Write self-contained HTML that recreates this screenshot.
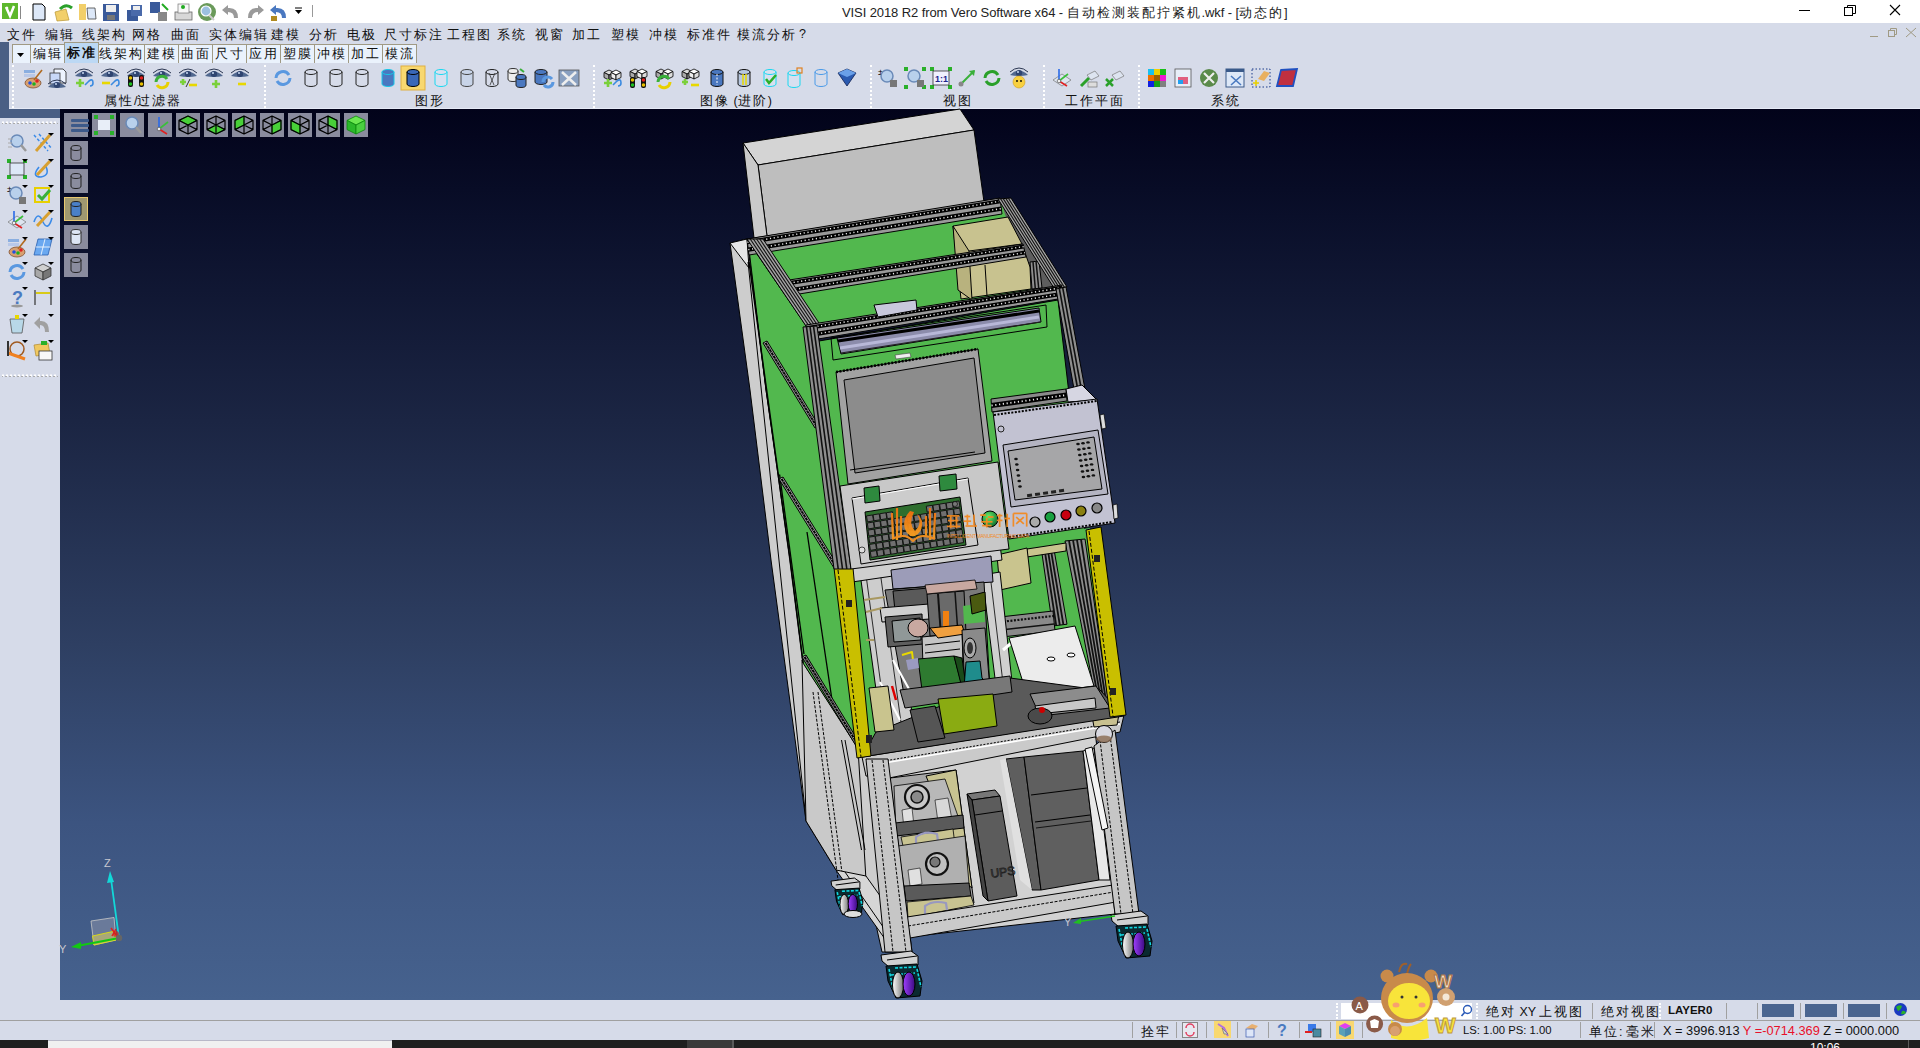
<!DOCTYPE html>
<html><head><meta charset="utf-8">
<style>
*{margin:0;padding:0;box-sizing:border-box}
html,body{width:1920px;height:1048px;overflow:hidden;background:#d6dbe9;font-family:"Liberation Sans",sans-serif;font-size:12px;color:#000;position:relative}
.abs{position:absolute}
#title{left:0;top:0;width:1920px;height:23px;background:#fff}
#ttext{left:842px;top:4px;font-size:13px;color:#222;white-space:nowrap;letter-spacing:-0.1px}
#menu{left:0;top:23px;width:1920px;height:19px;background:#d6dbe9}
.mi{position:absolute;top:27px;font-size:12.5px;white-space:nowrap;color:#111}
#tabs{left:12px;top:42px;width:404px;height:21px}
.tab{position:absolute;top:44px;height:19px;background:#eaf2fc;border:1px solid #a09a84;border-bottom:none;font-size:12.5px;text-align:center;line-height:19px;color:#111}
#tbpanel{left:9px;top:63px;width:1911px;height:46px;background:#d6dbe9;border-bottom:1px solid #e6eaf6}
.grip{position:absolute;width:2px;border-left:2px dotted #fff}
.lbl{position:absolute;top:93px;font-size:12.5px;white-space:nowrap;color:#111}
#viewport{left:60px;top:109px;width:1860px;height:892px;background:linear-gradient(#02031a 0%,#0a0f2a 12%,#1b2543 35%,#2e3f62 60%,#3c5480 80%,#46628e 100%)}
#lstrip{left:0;top:42px;width:9px;height:76px;background:#4a5f84}
#lstrip2{left:0;top:109px;width:60px;height:9px;background:#4a5f84}
.vb{position:absolute;width:24px;height:24px;background:#8a8c9e}
#status{left:0;top:1000px;width:1920px;height:40px;background:#d6dbe9}
.st{position:absolute;font-size:12.5px;white-space:nowrap;color:#111}
.sep{position:absolute;width:1px;background:#a0a0a0}
#taskbar{left:0;top:1040px;width:1920px;height:8px;background:#1f1f1f}
.cj{letter-spacing:2px}
</style></head><body>
<div id="title" class="abs"></div>
<div id="ttext" class="abs">VISI 2018 R2 from Vero Software x64 - <span class="cj">自动检测装配拧紧机</span>.wkf - [<span class="cj">动态的</span>]</div>
<!-- title icons -->
<svg class="abs" style="left:0;top:0" width="320" height="23">
<rect x="2" y="3" width="16" height="16" fill="#5db82c"/>
<path d="M6,7 L10,16 L14,6" stroke="#fff" stroke-width="2.5" fill="none"/><circle cx="7" cy="8" r="1.3" fill="#fff"/>
<line x1="20.5" y1="6" x2="20.5" y2="19" stroke="#888"/>
<path d="M33,4 L42,4 L45,7 L45,20 L33,20 Z" fill="#dde8f8" stroke="#000"/>
<path d="M55,12 L66,9 L69,20 L57,21 Z" fill="#f2cf6a" stroke="#b89530" stroke-width="0.7"/><path d="M60,9 Q66,3 72,8" stroke="#2aa02a" stroke-width="3" fill="none"/>
<path d="M79,4 L86,4 L86,20 L79,20 Z" fill="#f2cf6a"/><path d="M87,8 L95,8 L96,19 L88,19 Z" fill="#dde8f8" stroke="#444" stroke-width="0.8"/>
<rect x="103" y="4" width="16" height="17" fill="#3a5a9a"/><rect x="106" y="5" width="10" height="7" fill="#eee"/><rect x="107" y="15" width="8" height="5" fill="#777"/>
<rect x="127" y="10" width="11" height="11" fill="#3a5a9a"/><rect x="131" y="5" width="11" height="11" fill="#4a6aaa"/><rect x="133" y="6" width="7" height="4" fill="#eee"/>
<rect x="150" y="2" width="10" height="11" fill="#3a5a9a"/><rect x="158" y="12" width="9" height="9" fill="#888"/><path d="M162,4 L168,10" stroke="#2a2" stroke-width="2"/>
<rect x="175" y="12" width="17" height="8" fill="#d8d8d8" stroke="#666" stroke-width="0.8"/><rect x="178" y="4" width="11" height="9" fill="#f8f8f8" stroke="#777" stroke-width="0.7"/><circle cx="183" cy="7" r="2" fill="#2a2"/>
<circle cx="207" cy="12" r="9" fill="#6a9a5a"/><circle cx="206" cy="11" r="5" fill="#9cc0e0" stroke="#fff" stroke-width="1.2"/><line x1="209" y1="15" x2="214" y2="20" stroke="#ccc" stroke-width="2"/>
<path d="M238,18 Q238,7 228,8 L228,5 L222,10 L228,15 L228,12 Q234,12 234,18 Z" fill="#9a9a9a"/>
<path d="M248,18 Q248,7 258,8 L258,5 L264,10 L258,15 L258,12 Q252,12 252,18 Z" fill="#9a9a9a"/>
<path d="M286,18 Q286,7 276,8 L276,5 L270,10 L276,15 L276,12 Q282,12 282,18 Z" fill="#4a78c0"/><rect x="271" y="16" width="6" height="5" fill="#b08a20"/>
<path d="M295,10 L302,10 L298.5,14 Z" fill="#000"/><line x1="295" y1="8" x2="302" y2="8" stroke="#000"/>
<line x1="312.5" y1="5" x2="312.5" y2="17" stroke="#999"/>
</svg>
<div id="menu" class="abs"></div>
<!-- window buttons -->
<svg class="abs" style="left:1790px;top:0" width="130" height="42">
<line x1="9" y1="10.5" x2="20" y2="10.5" stroke="#000"/>
<rect x="54.5" y="7.5" width="8" height="8" fill="none" stroke="#000"/><path d="M57.5,7.5 V5.5 H65.5 V13.5 H62.5" fill="none" stroke="#000"/>
<path d="M100,5 L110,15 M110,5 L100,15" stroke="#000" stroke-width="1.1"/>
<line x1="80" y1="36.5" x2="88" y2="36.5" stroke="#a09a84"/>
<rect x="98.5" y="30.5" width="6" height="6" fill="none" stroke="#a09a84"/><path d="M100.5,30.5 V28.5 H106.5 V34.5 H104.5" fill="none" stroke="#a09a84"/>
<path d="M116,28 L126,37 M126,28 L116,37" stroke="#a09a84"/>
</svg>

<span class="mi" style="left:7px"><span class="cj">文件</span></span><span class="mi" style="left:45px"><span class="cj">编辑</span></span><span class="mi" style="left:82px"><span class="cj">线架构</span></span><span class="mi" style="left:132px"><span class="cj">网格</span></span><span class="mi" style="left:171px"><span class="cj">曲面</span></span><span class="mi" style="left:209px"><span class="cj">实体编辑</span></span><span class="mi" style="left:271px"><span class="cj">建模</span></span><span class="mi" style="left:309px"><span class="cj">分析</span></span><span class="mi" style="left:347px"><span class="cj">电极</span></span><span class="mi" style="left:384px"><span class="cj">尺寸标注</span></span><span class="mi" style="left:447px"><span class="cj">工程图</span></span><span class="mi" style="left:497px"><span class="cj">系统</span></span><span class="mi" style="left:535px"><span class="cj">视窗</span></span><span class="mi" style="left:572px"><span class="cj">加工</span></span><span class="mi" style="left:611px"><span class="cj">塑模</span></span><span class="mi" style="left:649px"><span class="cj">冲模</span></span><span class="mi" style="left:687px"><span class="cj">标准件</span></span><span class="mi" style="left:737px"><span class="cj">模流分析</span></span><span class="mi" style="left:799px">?</span>
<div id="lstrip" class="abs"></div>
<div id="tbpanel" class="abs"></div>
<!-- tabs -->
<div class="tab" style="left:12px;width:19px;"><svg width="17" height="17"><path d="M4,8 L11,8 L7.5,12 Z" fill="#000"/></svg></div>
<div class="tab" style="left:30px;width:35px"><span class="cj">编辑</span></div>
<div class="tab" style="left:64px;width:35px;top:42px;height:21px;background:#bcd8f4;font-weight:bold;line-height:20px"><span class="cj">标准</span></div>
<div class="tab" style="left:98px;width:47px"><span class="cj">线架构</span></div>
<div class="tab" style="left:144px;width:35px"><span class="cj">建模</span></div>
<div class="tab" style="left:178px;width:35px"><span class="cj">曲面</span></div>
<div class="tab" style="left:212px;width:35px"><span class="cj">尺寸</span></div>
<div class="tab" style="left:246px;width:35px"><span class="cj">应用</span></div>
<div class="tab" style="left:280px;width:35px"><span class="cj">塑膜</span></div>
<div class="tab" style="left:314px;width:35px"><span class="cj">冲模</span></div>
<div class="tab" style="left:348px;width:35px"><span class="cj">加工</span></div>
<div class="tab" style="left:382px;width:35px"><span class="cj">模流</span></div>
<!-- toolbar grips -->
<div class="grip" style="left:12px;top:65px;height:43px"></div>
<div class="grip" style="left:264px;top:65px;height:43px"></div>
<div class="grip" style="left:593px;top:65px;height:43px"></div>
<div class="grip" style="left:870px;top:65px;height:43px"></div>
<div class="grip" style="left:1043px;top:65px;height:43px"></div>
<div class="grip" style="left:1138px;top:65px;height:43px"></div>
<span class="lbl" style="left:104px"><span class="cj">属性</span>/<span class="cj">过滤器</span></span>
<span class="lbl" style="left:415px"><span class="cj">图形</span></span>
<span class="lbl" style="left:700px"><span class="cj">图像</span> (<span class="cj">进阶</span>)</span>
<span class="lbl" style="left:943px"><span class="cj">视图</span></span>
<span class="lbl" style="left:1065px"><span class="cj">工作平面</span></span>
<span class="lbl" style="left:1211px"><span class="cj">系统</span></span>

<svg class="abs" style="left:0;top:0" width="1320" height="109"><rect x="24" y="70" width="11" height="3" fill="#8aaee0"/><rect x="24" y="74" width="11" height="3" fill="#b8c8e8"/><ellipse cx="33" cy="83" rx="8" ry="5" fill="#d8a070" stroke="#805030" stroke-width="0.8"/><circle cx="30" cy="83" r="1.8" fill="#2050e0"/><circle cx="34" cy="84" r="1.8" fill="#20b020"/><circle cx="37" cy="81" r="1.8" fill="#e02020"/><line x1="34" y1="80" x2="42" y2="70" stroke="#b06a20" stroke-width="1.6"/><path d="M54,69 H63 L66,72 V83 H54 Z" fill="#eef4ff" stroke="#222" stroke-width="0.8"/><rect x="50" y="73" width="10" height="11" fill="#c8d8f8" stroke="#333" stroke-width="0.8"/><path d="M48,87 Q57,78 66,87 Q57,89 48,87 Z" fill="#51688f"/><ellipse cx="57" cy="85" rx="3.2" ry="3" fill="#2f4470"/><circle cx="56" cy="84" r="1" fill="#c8d8f0"/><path d="M48,84 Q57,76 66,84" stroke="#2a3550" stroke-width="1" fill="none"/><path d="M75,76 Q84,67 93,76 Q84,78 75,76 Z" fill="#51688f"/><ellipse cx="84" cy="74" rx="3.2" ry="3" fill="#2f4470"/><circle cx="83" cy="73" r="1" fill="#c8d8f0"/><path d="M75,73 Q84,65 93,73" stroke="#2a3550" stroke-width="1" fill="none"/><path d="M76,83 H84 M80,79 V87" stroke="#7ad03a" stroke-width="2.6"/><path d="M85,85 L89,81 Q93,78 93,83 Q93,86 90,86" stroke="#3a8ae0" stroke-width="1.6" fill="none"/><path d="M101,76 Q110,67 119,76 Q110,78 101,76 Z" fill="#51688f"/><ellipse cx="110" cy="74" rx="3.2" ry="3" fill="#2f4470"/><circle cx="109" cy="73" r="1" fill="#c8d8f0"/><path d="M101,73 Q110,65 119,73" stroke="#2a3550" stroke-width="1" fill="none"/><path d="M102,83 H110" stroke="#e8d800" stroke-width="2.6"/><path d="M111,85 L115,81 Q119,78 119,83 Q119,86 116,86" stroke="#3a8ae0" stroke-width="1.6" fill="none"/><path d="M127,76 Q136,67 145,76 Q136,78 127,76 Z" fill="#51688f"/><ellipse cx="136" cy="74" rx="3.2" ry="3" fill="#2f4470"/><circle cx="135" cy="73" r="1" fill="#c8d8f0"/><path d="M127,73 Q136,65 145,73" stroke="#2a3550" stroke-width="1" fill="none"/><rect x="128" y="75" width="5" height="12" rx="2" fill="#111"/><rect x="139" y="75" width="5" height="12" rx="2" fill="#111"/><circle cx="130.5" cy="78" r="1.8" fill="#e8c000"/><circle cx="130.5" cy="84" r="1.8" fill="#20c020"/><circle cx="141.5" cy="78" r="1.8" fill="#e02020"/><circle cx="141.5" cy="84" r="1.8" fill="#e8c000"/><path d="M153,76 Q162,67 171,76 Q162,78 153,76 Z" fill="#51688f"/><ellipse cx="162" cy="74" rx="3.2" ry="3" fill="#2f4470"/><circle cx="161" cy="73" r="1" fill="#c8d8f0"/><path d="M153,73 Q162,65 171,73" stroke="#2a3550" stroke-width="1" fill="none"/><path d="M156,82 A6,6 0 0 1 167,79" stroke="#3ab03a" stroke-width="3" fill="none"/><path d="M168,82 A6,6 0 0 1 157,85" stroke="#e8d000" stroke-width="3" fill="none"/><path d="M179,76 Q188,67 197,76 Q188,78 179,76 Z" fill="#51688f"/><ellipse cx="188" cy="74" rx="3.2" ry="3" fill="#2f4470"/><circle cx="187" cy="73" r="1" fill="#c8d8f0"/><path d="M179,73 Q188,65 197,73" stroke="#2a3550" stroke-width="1" fill="none"/><path d="M180,82 H186 M183,79 V85" stroke="#7ad03a" stroke-width="2.6"/><line x1="186" y1="87" x2="190" y2="79" stroke="#333"/><path d="M189,85 H197" stroke="#e8d800" stroke-width="2.6"/><path d="M205,76 Q214,67 223,76 Q214,78 205,76 Z" fill="#51688f"/><ellipse cx="214" cy="74" rx="3.2" ry="3" fill="#2f4470"/><circle cx="213" cy="73" r="1" fill="#c8d8f0"/><path d="M205,73 Q214,65 223,73" stroke="#2a3550" stroke-width="1" fill="none"/><path d="M212,84 H220 M216,80 V88" stroke="#7ad03a" stroke-width="2.6"/><path d="M231,76 Q240,67 249,76 Q240,78 231,76 Z" fill="#51688f"/><ellipse cx="240" cy="74" rx="3.2" ry="3" fill="#2f4470"/><circle cx="239" cy="73" r="1" fill="#c8d8f0"/><path d="M231,73 Q240,65 249,73" stroke="#2a3550" stroke-width="1" fill="none"/><path d="M238,84 H246" stroke="#e8d800" stroke-width="2.6"/><path d="M276,78 A7,7 0 0 1 289,75" stroke="#5a98e0" stroke-width="3" fill="none"/><path d="M290,78 A7,7 0 0 1 277,81" stroke="#5a98e0" stroke-width="3" fill="none"/><path d="M305,72 V84 A6,2.5 0 0 0 317,84 V72" fill="none" stroke="#222" stroke-width="1"/><ellipse cx="311" cy="72" rx="6" ry="2.5" fill="none" stroke="#222" stroke-width="1"/><path d="M330,72 V84 A6,2.5 0 0 0 342,84 V72" fill="none" stroke="#222" stroke-width="1"/><ellipse cx="336" cy="72" rx="6" ry="2.5" fill="none" stroke="#222" stroke-width="1"/><path d="M356,72 V84 A6,2.5 0 0 0 368,84 V72" fill="none" stroke="#222" stroke-width="1"/><ellipse cx="362" cy="72" rx="6" ry="2.5" fill="none" stroke="#222" stroke-width="1"/><path d="M382,72 V84 A6,2.5 0 0 0 394,84 V72" fill="#4a78c0" stroke="#18c8e8" stroke-width="1"/><ellipse cx="388" cy="72" rx="6" ry="2.5" fill="#4a78c0" stroke="#18c8e8" stroke-width="1"/><rect x="401" y="66" width="24" height="24" fill="#f8d870" stroke="#e0b040"/><path d="M407,72 V84 A6,2.5 0 0 0 419,84 V72" fill="#3a68b8" stroke="#000" stroke-width="1"/><ellipse cx="413" cy="72" rx="6" ry="2.5" fill="#3a68b8" stroke="#000" stroke-width="1"/><path d="M435,72 V84 A6,2.5 0 0 0 447,84 V72" fill="#d8e0f0" stroke="#18d8f0" stroke-width="1"/><ellipse cx="441" cy="72" rx="6" ry="2.5" fill="#d8e0f0" stroke="#18d8f0" stroke-width="1"/><path d="M461,72 V84 A6,2.5 0 0 0 473,84 V72" fill="#c8d4e8" stroke="#444" stroke-width="1"/><ellipse cx="467" cy="72" rx="6" ry="2.5" fill="#c8d4e8" stroke="#444" stroke-width="1"/><path d="M486,72 V84 A6,2.5 0 0 0 498,84 V72" fill="none" stroke="#222" stroke-width="1"/><ellipse cx="492" cy="72" rx="6" ry="2.5" fill="none" stroke="#222" stroke-width="1"/><path d="M489,73 L494,85 M495,73 L490,85" stroke="#333" stroke-width="0.8"/><path d="M508,71 V79 A5,2.5 0 0 0 518,79 V71" fill="#eee" stroke="#333" stroke-width="1"/><ellipse cx="513" cy="71" rx="5" ry="2.5" fill="#eee" stroke="#333" stroke-width="1"/><path d="M516,77 V85 A5,2.5 0 0 0 526,85 V77" fill="#4a78c0" stroke="#222" stroke-width="1"/><ellipse cx="521" cy="77" rx="5" ry="2.5" fill="#4a78c0" stroke="#222" stroke-width="1"/><path d="M520,69 L524,72" stroke="#3ab03a" stroke-width="2"/><path d="M535,72 V82 A6,2.5 0 0 0 547,82 V72" fill="#4a78c0" stroke="#222" stroke-width="1"/><ellipse cx="541" cy="72" rx="6" ry="2.5" fill="#4a78c0" stroke="#222" stroke-width="1"/><path d="M543,82 A5,5 0 0 1 552,79" stroke="#5a98e0" stroke-width="3" fill="none"/><path d="M553,82 A5,5 0 0 1 544,85" stroke="#5a98e0" stroke-width="3" fill="none"/><rect x="559" y="70" width="20" height="16" fill="#8aa0c0" stroke="#555" stroke-width="0.8"/><path d="M562,72 L576,85 M576,72 L562,85" stroke="#eee" stroke-width="2.5"/><path d="M604,72.5 L609,70 L614,72.5 L609,75 Z" fill="#ddd" stroke="#000" stroke-width="0.8"/><path d="M604,72.5 L609,75 L609,80 L604,77.5 Z" fill="#aaa" stroke="#000" stroke-width="0.8"/><path d="M614,72.5 L609,75 L609,80 L614,77.5 Z" fill="#888" stroke="#000" stroke-width="0.8"/><path d="M611,72.5 L616,70 L621,72.5 L616,75 Z" fill="#fff" stroke="#000" stroke-width="0.8"/><path d="M611,72.5 L616,75 L616,80 L611,77.5 Z" fill="#eee" stroke="#000" stroke-width="0.8"/><path d="M621,72.5 L616,75 L616,80 L621,77.5 Z" fill="#ddd" stroke="#000" stroke-width="0.8"/><path d="M604,83 H612 M608,79 V87" stroke="#7ad03a" stroke-width="2.6"/><path d="M613,85 L617,81 Q621,78 621,83 Q621,86 618,86" stroke="#3a8ae0" stroke-width="1.6" fill="none"/><path d="M630,71.5 L635,69 L640,71.5 L635,74 Z" fill="#ddd" stroke="#000" stroke-width="0.8"/><path d="M630,71.5 L635,74 L635,79 L630,76.5 Z" fill="#aaa" stroke="#000" stroke-width="0.8"/><path d="M640,71.5 L635,74 L635,79 L640,76.5 Z" fill="#888" stroke="#000" stroke-width="0.8"/><path d="M637,71.5 L642,69 L647,71.5 L642,74 Z" fill="#fff" stroke="#000" stroke-width="0.8"/><path d="M637,71.5 L642,74 L642,79 L637,76.5 Z" fill="#eee" stroke="#000" stroke-width="0.8"/><path d="M647,71.5 L642,74 L642,79 L647,76.5 Z" fill="#ddd" stroke="#000" stroke-width="0.8"/><rect x="630" y="77" width="5" height="11" rx="2" fill="#111"/><rect x="641" y="77" width="5" height="11" rx="2" fill="#111"/><circle cx="632.5" cy="80" r="1.8" fill="#e8c000"/><circle cx="632.5" cy="85" r="1.8" fill="#20c020"/><circle cx="643.5" cy="80" r="1.8" fill="#e02020"/><circle cx="643.5" cy="85" r="1.8" fill="#e8c000"/><path d="M656,71.5 L661,69 L666,71.5 L661,74 Z" fill="#ddd" stroke="#000" stroke-width="0.8"/><path d="M656,71.5 L661,74 L661,79 L656,76.5 Z" fill="#aaa" stroke="#000" stroke-width="0.8"/><path d="M666,71.5 L661,74 L661,79 L666,76.5 Z" fill="#888" stroke="#000" stroke-width="0.8"/><path d="M663,71.5 L668,69 L673,71.5 L668,74 Z" fill="#fff" stroke="#000" stroke-width="0.8"/><path d="M663,71.5 L668,74 L668,79 L663,76.5 Z" fill="#eee" stroke="#000" stroke-width="0.8"/><path d="M673,71.5 L668,74 L668,79 L673,76.5 Z" fill="#ddd" stroke="#000" stroke-width="0.8"/><path d="M658,82 A6,6 0 0 1 669,79" stroke="#3ab03a" stroke-width="3" fill="none"/><path d="M670,82 A6,6 0 0 1 659,85" stroke="#e8d000" stroke-width="3" fill="none"/><path d="M682,71.5 L687,69 L692,71.5 L687,74 Z" fill="#ddd" stroke="#000" stroke-width="0.8"/><path d="M682,71.5 L687,74 L687,79 L682,76.5 Z" fill="#aaa" stroke="#000" stroke-width="0.8"/><path d="M692,71.5 L687,74 L687,79 L692,76.5 Z" fill="#888" stroke="#000" stroke-width="0.8"/><path d="M689,71.5 L694,69 L699,71.5 L694,74 Z" fill="#fff" stroke="#000" stroke-width="0.8"/><path d="M689,71.5 L694,74 L694,79 L689,76.5 Z" fill="#eee" stroke="#000" stroke-width="0.8"/><path d="M699,71.5 L694,74 L694,79 L699,76.5 Z" fill="#ddd" stroke="#000" stroke-width="0.8"/><path d="M682,82 H688 M685,79 V85" stroke="#7ad03a" stroke-width="2.6"/><path d="M691,85 H699" stroke="#e8d800" stroke-width="2.6"/><path d="M711,72 V84 A6,2.5 0 0 0 723,84 V72" fill="#4a78c0" stroke="#111" stroke-width="1"/><ellipse cx="717" cy="72" rx="6" ry="2.5" fill="#4a78c0" stroke="#111" stroke-width="1"/><line x1="717" y1="74" x2="717" y2="85" stroke="#fff" stroke-dasharray="2,1.5"/><path d="M738,72 V84 A6,2.5 0 0 0 750,84 V72" fill="#b8c8e0" stroke="#111" stroke-width="1"/><ellipse cx="744" cy="72" rx="6" ry="2.5" fill="#b8c8e0" stroke="#111" stroke-width="1"/><line x1="743" y1="74" x2="743" y2="85" stroke="#e8d800" stroke-width="1.5"/><line x1="746" y1="74" x2="746" y2="85" stroke="#e8d800" stroke-width="1.5"/><path d="M764,72 V84 A6,2.5 0 0 0 776,84 V72" fill="#d8e0f0" stroke="#18d8f0" stroke-width="1"/><ellipse cx="770" cy="72" rx="6" ry="2.5" fill="#d8e0f0" stroke="#18d8f0" stroke-width="1"/><path d="M766,79 L769,83 L776,75" stroke="#2ab02a" stroke-width="2.5" fill="none"/><path d="M788,73 V85 A6,2.5 0 0 0 800,85 V73" fill="#d8e0f0" stroke="#18d8f0" stroke-width="1"/><ellipse cx="794" cy="73" rx="6" ry="2.5" fill="#d8e0f0" stroke="#18d8f0" stroke-width="1"/><rect x="797" y="68" width="5" height="5" fill="none" stroke="#e08020" stroke-width="1.2"/><path d="M815,72 V84 A6,2.5 0 0 0 827,84 V72" fill="none" stroke="#4a9ae8" stroke-width="1"/><ellipse cx="821" cy="72" rx="6" ry="2.5" fill="none" stroke="#4a9ae8" stroke-width="1"/><path d="M838,73 L847,69 L856,73 L847,86 Z" fill="#2a5ab0" stroke="#102050" stroke-width="0.8"/><path d="M838,73 L847,77 L856,73 L847,69 Z" fill="#6aa0e8"/><text x="878" y="75" font-size="9" font-family="Liberation Sans">±</text><circle cx="887" cy="76" r="6" fill="#b8d0ec" stroke="#6a8ab8" stroke-width="1.5"/><line x1="891" y1="80" x2="896" y2="86" stroke="#999" stroke-width="2.5"/><rect x="890" y="80" width="7" height="7" fill="#777"/><rect x="904" y="67" width="4" height="4" fill="#2ab02a"/><rect x="904" y="85" width="4" height="4" fill="#2ab02a"/><rect x="922" y="67" width="4" height="4" fill="#2ab02a"/><rect x="922" y="85" width="4" height="4" fill="#2ab02a"/><circle cx="914" cy="76" r="6" fill="#b8d0ec" stroke="#6a8ab8" stroke-width="1.5"/><line x1="918" y1="80" x2="923" y2="86" stroke="#999" stroke-width="2.5"/><rect x="917" y="80" width="7" height="7" fill="#777"/><rect x="930" y="67" width="4" height="4" fill="#2ab02a"/><rect x="930" y="85" width="4" height="4" fill="#2ab02a"/><rect x="948" y="67" width="4" height="4" fill="#2ab02a"/><rect x="948" y="85" width="4" height="4" fill="#2ab02a"/><rect x="933" y="71" width="16" height="14" fill="#f0f0ff" stroke="#333" stroke-width="0.8"/><text x="935" y="82" font-size="9" font-family="Liberation Sans" fill="#22228a" font-weight="bold">1:1</text><line x1="961" y1="84" x2="974" y2="71" stroke="#3ab03a" stroke-width="2"/><path d="M975,70 L969,71 L974,76 Z" fill="#3ab03a"/><circle cx="961" cy="84" r="2.5" fill="#888"/><path d="M985,78 A7,7 0 0 1 998,75" stroke="#2aa02a" stroke-width="3" fill="none"/><path d="M999,78 A7,7 0 0 1 986,81" stroke="#2aa02a" stroke-width="3" fill="none"/><path d="M1010,75 Q1019,66 1028,75 Q1019,77 1010,75 Z" fill="#51688f"/><ellipse cx="1019" cy="73" rx="3.2" ry="3" fill="#2f4470"/><circle cx="1018" cy="72" r="1" fill="#c8d8f0"/><path d="M1010,72 Q1019,64 1028,72" stroke="#2a3550" stroke-width="1" fill="none"/><circle cx="1019" cy="82" r="6" fill="#f8d040" stroke="#d0a020" stroke-width="0.6"/><circle cx="1017" cy="81" r="0.9" fill="#000"/><circle cx="1021" cy="81" r="0.9" fill="#000"/><path d="M1053,80 L1062,74 L1071,80 L1062,86 Z" fill="#dde4f0" stroke="#777" stroke-width="0.7"/><line x1="1059" y1="81" x2="1059" y2="69" stroke="#2a6ae8" stroke-width="1.6"/><line x1="1059" y1="81" x2="1068" y2="74" stroke="#3ac03a" stroke-width="1.6"/><line x1="1059" y1="81" x2="1067" y2="86" stroke="#e02020" stroke-width="1.6"/><circle cx="1059" cy="81" r="1.8" fill="#eee" stroke="#444" stroke-width="0.6"/><path d="M1087,75 L1095,71 L1099,76 L1091,80 Z" fill="#dde4f0" stroke="#777" stroke-width="0.7"/><rect x="1088" y="82" width="9" height="5" fill="#ddd" stroke="#777" stroke-width="0.7"/><path d="M1081,86 L1089,78" stroke="#2aa02a" stroke-width="3"/><path d="M1112,75 L1120,71 L1124,76 L1116,80 Z" fill="#dde4f0" stroke="#777" stroke-width="0.7"/><path d="M1106,86 L1113,79 M1106,79 L1113,86" stroke="#2aa02a" stroke-width="2.5"/><rect x="1148" y="69" width="6" height="6" fill="#18c0f0"/><rect x="1154" y="69" width="6" height="6" fill="#f0d000"/><rect x="1160" y="69" width="6" height="6" fill="#18c018"/><rect x="1148" y="75" width="6" height="6" fill="#f07000"/><rect x="1154" y="75" width="6" height="6" fill="#a06000"/><rect x="1160" y="75" width="6" height="6" fill="#f018d0"/><rect x="1148" y="81" width="6" height="6" fill="#1020e0"/><rect x="1154" y="81" width="6" height="6" fill="#18a018"/><rect x="1160" y="81" width="6" height="6" fill="#808080"/><rect x="1175" y="69" width="16" height="18" fill="#e8eef8" stroke="#555" stroke-width="0.8"/><rect x="1178" y="77" width="10" height="7" fill="#e06080"/><rect x="1178" y="80" width="5" height="4" fill="#20a0f0"/><circle cx="1209" cy="78" r="9" fill="#5a8a4a"/><path d="M1204,73 L1214,83 M1214,73 L1204,83" stroke="#eee" stroke-width="2.2"/><rect x="1226" y="69" width="18" height="18" fill="#dde8f8" stroke="#3a5a8a" stroke-width="1"/><rect x="1226" y="69" width="18" height="3" fill="#3a5a8a"/><path d="M1231,76 L1241,85 M1241,76 L1231,85" stroke="#4a7ac0" stroke-width="1.6"/><rect x="1252" y="69" width="18" height="18" fill="none" stroke="#1a3a8a" stroke-dasharray="1.5,2"/><path d="M1258,79 L1264,71 L1270,73 L1264,81 Z" fill="#e8b060"/><path d="M1253,83 H1259 M1256,80 V86" stroke="#e8d000" stroke-width="1.6"/><path d="M1281,70 L1297,69 L1293,86 L1277,86 Z" fill="#c03040" stroke="#2050c0" stroke-width="1.8"/></svg>
<div id="lstrip2" class="abs"></div>
<div id="viewport" class="abs"></div>
<svg class="abs" style="left:0;top:118px" width="60" height="882"><line x1="2" y1="4.5" x2="58" y2="4.5" stroke="#fff" stroke-width="2" stroke-dasharray="2,2"/><line x1="2" y1="257.5" x2="58" y2="257.5" stroke="#fff" stroke-width="2" stroke-dasharray="2,2"/><line x1="2" y1="5.5" x2="58" y2="5.5" stroke="#aaa" stroke-width="1" stroke-dasharray="2,2" stroke-dashoffset="1"/><line x1="2" y1="258.5" x2="58" y2="258.5" stroke="#aaa" stroke-width="1" stroke-dasharray="2,2" stroke-dashoffset="1"/><circle cx="17" cy="23" r="6" fill="#b8d0ec" stroke="#6a8ab8" stroke-width="1.5"/><line x1="21" y1="27" x2="26" y2="33" stroke="#999" stroke-width="2.5"/><path d="M8,21 L13,21 M8,25 L12,25 M8,29 L12,29" stroke="#aaa" stroke-width="1.2"/><path d="M34,17 L48,33 M39,16 L52,31" stroke="#3a8ae8" stroke-width="1.5" stroke-dasharray="3,2"/><line x1="36" y1="33" x2="50" y2="17" stroke="#d8a030" stroke-width="3"/><path d="M48,15 h6 l-3,3 z" fill="#000"/><rect x="7" y="41" width="4" height="4" fill="#2ab02a"/><rect x="7" y="57" width="4" height="4" fill="#2ab02a"/><rect x="23" y="41" width="4" height="4" fill="#2ab02a"/><rect x="23" y="57" width="4" height="4" fill="#2ab02a"/><rect x="10" y="45" width="14" height="12" fill="#dde8f8" stroke="#333" stroke-width="0.8"/><path d="M39,49 Q31,59 41,59 Q51,57 45,47" stroke="#3a8ae8" stroke-width="1.6" fill="none"/><line x1="37" y1="57" x2="50" y2="43" stroke="#d8a030" stroke-width="3"/><path d="M22,41 h6 l-3,3 z" fill="#000"/><path d="M48,41 h6 l-3,3 z" fill="#000"/><text x="7" y="74" font-size="9" font-family="Liberation Sans">±</text><circle cx="16" cy="75" r="6" fill="#b8d0ec" stroke="#6a8ab8" stroke-width="1.5"/><line x1="20" y1="79" x2="25" y2="85" stroke="#999" stroke-width="2.5"/><rect x="19" y="79" width="7" height="7" fill="#777"/><rect x="35" y="70" width="14" height="14" fill="none" stroke="#e8d000" stroke-width="2"/><path d="M38,77 L42,81 L50,72" stroke="#3ab03a" stroke-width="3" fill="none"/><path d="M22,67 h6 l-3,3 z" fill="#000"/><path d="M48,67 h6 l-3,3 z" fill="#000"/><path d="M8,104 L17,98 L26,104 L17,110 Z" fill="#dde4f0" stroke="#777" stroke-width="0.7"/><line x1="14" y1="105" x2="14" y2="93" stroke="#2a6ae8" stroke-width="1.6"/><line x1="14" y1="105" x2="23" y2="98" stroke="#3ac03a" stroke-width="1.6"/><line x1="14" y1="105" x2="22" y2="110" stroke="#e02020" stroke-width="1.6"/><circle cx="14" cy="105" r="1.8" fill="#eee" stroke="#444" stroke-width="0.6"/><path d="M34,104 Q38,92 43,104 Q48,114 52,100" stroke="#3a8ae8" stroke-width="1.6" fill="none"/><line x1="37" y1="108" x2="50" y2="94" stroke="#d8a030" stroke-width="3"/><path d="M22,92 h6 l-3,3 z" fill="#000"/><path d="M48,92 h6 l-3,3 z" fill="#000"/><rect x="8" y="121" width="11" height="3" fill="#8aaee0"/><rect x="8" y="125" width="11" height="3" fill="#b8c8e8"/><ellipse cx="17" cy="134" rx="8" ry="5" fill="#d8a070" stroke="#805030" stroke-width="0.8"/><circle cx="14" cy="134" r="1.8" fill="#2050e0"/><circle cx="18" cy="135" r="1.8" fill="#20b020"/><circle cx="21" cy="132" r="1.8" fill="#e02020"/><line x1="18" y1="131" x2="26" y2="121" stroke="#b06a20" stroke-width="1.6"/><path d="M38,121 L52,121 L48,137 L34,137 Z" fill="#6aa8f0" stroke="#2a60b0" stroke-width="0.8"/><path d="M45,121 L41,137 M36,129 L50,129" stroke="#fff" stroke-width="0.8"/><path d="M22,119 h6 l-3,3 z" fill="#000"/><path d="M48,119 h6 l-3,3 z" fill="#000"/><path d="M10,154 A7,7 0 0 1 23,151" stroke="#5a98e0" stroke-width="3" fill="none"/><path d="M24,154 A7,7 0 0 1 11,157" stroke="#5a98e0" stroke-width="3" fill="none"/><path d="M35,150.0 L43,146 L51,150.0 L43,154 Z" fill="#d0d0d0" stroke="#333" stroke-width="0.8"/><path d="M35,150.0 L43,154 L43,162 L35,158.0 Z" fill="#a8a8a8" stroke="#333" stroke-width="0.8"/><path d="M51,150.0 L43,154 L43,162 L51,158.0 Z" fill="#777" stroke="#333" stroke-width="0.8"/><path d="M22,144 h6 l-3,3 z" fill="#000"/><path d="M48,144 h6 l-3,3 z" fill="#000"/><text x="12" y="186" font-size="18" font-weight="bold" font-family="Liberation Sans" fill="#4a7ac0">?</text><ellipse cx="17" cy="188" rx="6" ry="1.5" fill="#999"/><path d="M35,172 V187 M51,172 V187" stroke="#333" stroke-width="1.2"/><path d="M36,175 H50" stroke="#d8c800" stroke-width="1.8"/><path d="M22,169 h6 l-3,3 z" fill="#000"/><path d="M48,169 h6 l-3,3 z" fill="#000"/><path d="M10,201 L24,201 L22,215 L12,215 Z" fill="#b8d8e8" stroke="#555" stroke-width="0.8"/><rect x="15" y="197" width="4" height="4" fill="#e8d800"/><path d="M49,214 Q49,202 40,203 L40,199 L34,205 L40,211 L40,207 Q45,207 45,214 Z" fill="#a0a0a0"/><path d="M22,196 h6 l-3,3 z" fill="#000"/><path d="M48,196 h6 l-3,3 z" fill="#000"/><circle cx="17" cy="231" r="7" fill="none" stroke="#a05a20" stroke-width="1.5"/><path d="M8,235 L25,241" stroke="#f08020" stroke-width="3"/><rect x="7" y="223" width="2" height="15" fill="#333"/><path d="M34,227 L48,225 L50,236 L36,238 Z" fill="#f0c860" stroke="#b08a30" stroke-width="0.7"/><rect x="39" y="233" width="13" height="9" fill="#f8f8f8" stroke="#333" stroke-width="0.8"/><rect x="41" y="223" width="6" height="4" fill="#2ab02a"/><path d="M22,222 h6 l-3,3 z" fill="#000"/><path d="M48,222 h6 l-3,3 z" fill="#000"/></svg>
<svg class="abs" style="left:60px;top:109px" width="320" height="180"><rect x="4" y="4" width="24" height="24" fill="#8a8c9e"/><rect x="32" y="4" width="24" height="24" fill="#8a8c9e"/><rect x="60" y="4" width="24" height="24" fill="#8a8c9e"/><rect x="88" y="4" width="24" height="24" fill="#8a8c9e"/><rect x="116" y="4" width="24" height="24" fill="#8a8c9e"/><rect x="144" y="4" width="24" height="24" fill="#8a8c9e"/><rect x="172" y="4" width="24" height="24" fill="#8a8c9e"/><rect x="200" y="4" width="24" height="24" fill="#8a8c9e"/><rect x="228" y="4" width="24" height="24" fill="#8a8c9e"/><rect x="256" y="4" width="24" height="24" fill="#8a8c9e"/><rect x="284" y="4" width="24" height="24" fill="#8a8c9e"/><rect x="11" y="10" width="18" height="3" rx="1" fill="#3d5a8a"/><rect x="11" y="15" width="18" height="3" rx="1" fill="#3d5a8a"/><rect x="11" y="20" width="18" height="3" rx="1" fill="#3d5a8a"/><rect x="34" y="6" width="4" height="4" fill="#2ab02a"/><rect x="34" y="22" width="4" height="4" fill="#2ab02a"/><rect x="50" y="6" width="4" height="4" fill="#2ab02a"/><rect x="50" y="22" width="4" height="4" fill="#2ab02a"/><rect x="38" y="11" width="12" height="10" fill="#e8eef8"/><circle cx="72" cy="14" r="6" fill="#b8d0ec" stroke="#6a8ab8" stroke-width="1.5"/><line x1="76" y1="18" x2="81" y2="24" stroke="#999" stroke-width="2.5"/><line x1="99" y1="20" x2="99" y2="8" stroke="#2a6ae8" stroke-width="1.6"/><line x1="99" y1="20" x2="108" y2="13" stroke="#3ac03a" stroke-width="1.6"/><line x1="99" y1="20" x2="107" y2="25" stroke="#e02020" stroke-width="1.6"/><circle cx="99" cy="20" r="1.8" fill="#eee" stroke="#444" stroke-width="0.6"/><polygon points="128.0,7.0 137.0,11.4 128.0,16.0 119.0,11.4" fill="#48d038" stroke="#0a8a0a" stroke-width="0.8"/><path d="M128,7 L137,11.4 L137,20.6 L128,25 L119,20.6 L119,11.4 Z M128,16 L119,11.4 M128,16 L137,11.4 M128,16 L119,20.6 M128,16 L137,20.6 M128,16 L128,25" fill="none" stroke="#000" stroke-width="1.2" stroke-linejoin="round"/><polygon points="156.0,16.0 165.0,20.6 156.0,25.0 147.0,20.6" fill="#48d038" stroke="#0a8a0a" stroke-width="0.8"/><path d="M156,7 L165,11.4 L165,20.6 L156,25 L147,20.6 L147,11.4 Z M156,16 L156,7 M156,16 L147,11.4 M156,16 L165,11.4 M156,16 L147,20.6 M156,16 L165,20.6 M156,16 L156,25" fill="none" stroke="#000" stroke-width="1.2" stroke-linejoin="round"/><polygon points="175.0,11.4 184.0,7.0 184.0,16.0 175.0,20.6" fill="#48d038" stroke="#0a8a0a" stroke-width="0.8"/><path d="M184,7 L193,11.4 L193,20.6 L184,25 L175,20.6 L175,11.4 Z M184,16 L184,7 M184,16 L193,11.4 M184,16 L175,20.6 M184,16 L193,20.6 M184,16 L184,25" fill="none" stroke="#000" stroke-width="1.2" stroke-linejoin="round"/><polygon points="212.0,16.0 221.0,11.4 221.0,20.6 212.0,25.0" fill="#48d038" stroke="#0a8a0a" stroke-width="0.8"/><path d="M212,7 L221,11.4 L221,20.6 L212,25 L203,20.6 L203,11.4 Z M212,16 L212,7 M212,16 L203,11.4 M212,16 L221,11.4 M212,16 L203,20.6 M212,16 L212,25" fill="none" stroke="#000" stroke-width="1.2" stroke-linejoin="round"/><polygon points="231.0,11.4 240.0,16.0 240.0,25.0 231.0,20.6" fill="#48d038" stroke="#0a8a0a" stroke-width="0.8"/><path d="M240,7 L249,11.4 L249,20.6 L240,25 L231,20.6 L231,11.4 Z M240,16 L240,7 M240,16 L231,11.4 M240,16 L249,11.4 M240,16 L249,20.6 M240,16 L240,25" fill="none" stroke="#000" stroke-width="1.2" stroke-linejoin="round"/><polygon points="268.0,7.0 277.0,11.4 277.0,20.6 268.0,16.0" fill="#48d038" stroke="#0a8a0a" stroke-width="0.8"/><path d="M268,7 L277,11.4 L277,20.6 L268,25 L259,20.6 L259,11.4 Z M268,16 L268,7 M268,16 L259,11.4 M268,16 L259,20.6 M268,16 L277,20.6 M268,16 L268,25" fill="none" stroke="#000" stroke-width="1.2" stroke-linejoin="round"/><polygon points="296.0,7.0 305.0,11.4 296.0,16.0 287.0,11.4" fill="#6ae850" stroke="#0a8a0a" stroke-width="0.8"/><polygon points="287.0,11.4 296.0,16.0 296.0,25.0 287.0,20.6" fill="#2ab82a" stroke="#0a8a0a" stroke-width="0.8"/><polygon points="296.0,16.0 305.0,11.4 305.0,20.6 296.0,25.0" fill="#4ad040" stroke="#0a8a0a" stroke-width="0.8"/><rect x="4" y="32" width="24" height="24" fill="#8a8c9e"/><rect x="4" y="60" width="24" height="24" fill="#8a8c9e"/><rect x="4.5" y="88.5" width="23" height="23" fill="#a09870" stroke="#e8c870"/><rect x="4" y="116" width="24" height="24" fill="#8a8c9e"/><rect x="4" y="144" width="24" height="24" fill="#8a8c9e"/><path d="M11,39 V49 A5,2.5 0 0 0 21,49 V39" fill="none" stroke="#222" stroke-width="1"/><ellipse cx="16" cy="39" rx="5" ry="2.5" fill="none" stroke="#222" stroke-width="1"/><path d="M11,67 V77 A5,2.5 0 0 0 21,77 V67" fill="none" stroke="#222" stroke-width="1"/><ellipse cx="16" cy="67" rx="5" ry="2.5" fill="none" stroke="#222" stroke-width="1"/><path d="M11,95 V105 A5,2.5 0 0 0 21,105 V95" fill="#4a80c8" stroke="#222" stroke-width="1"/><ellipse cx="16" cy="95" rx="5" ry="2.5" fill="#4a80c8" stroke="#222" stroke-width="1"/><path d="M11,123 V133 A5,2.5 0 0 0 21,133 V123" fill="#dde6f4" stroke="#333" stroke-width="1"/><ellipse cx="16" cy="123" rx="5" ry="2.5" fill="#dde6f4" stroke="#333" stroke-width="1"/><path d="M11,151 V161 A5,2.5 0 0 0 21,161 V151" fill="none" stroke="#222" stroke-width="1"/><ellipse cx="16" cy="151" rx="5" ry="2.5" fill="none" stroke="#222" stroke-width="1"/></svg>
<!--MACHINE-->
<svg class="abs" style="left:0;top:0" width="1920" height="1048" viewBox="0 0 1920 1048">
<defs><linearGradient id="wheelW" x1="0" x2="1"><stop offset="0" stop-color="#fff"/><stop offset="1" stop-color="#777"/></linearGradient><linearGradient id="wheelP" x1="0" x2="1"><stop offset="0" stop-color="#a040ff"/><stop offset="1" stop-color="#3a0a80"/></linearGradient></defs>
<g stroke-linejoin="round">
<polygon points="743.0,143.0 960.0,109.0 974.0,130.0 758.0,165.0" fill="#d4d4d4" stroke="#000" stroke-width="1" />
<polygon points="758.0,165.0 974.0,130.0 984.0,202.0 767.0,236.0" fill="#bebebe" stroke="#000" stroke-width="1" />
<polygon points="743.0,143.0 758.0,165.0 767.0,236.0 754.0,238.0" fill="#cacaca" stroke="#000" stroke-width="1" />
<polygon points="730.0,243.0 747.0,239.0 766.0,390.0 791.0,560.0 804.0,657.0 860.0,740.0 876.0,757.0 888.0,760.0 912.0,952.0 882.0,952.0 866.0,880.0 836.0,870.0 806.0,821.0 771.0,560.0 750.0,390.0" fill="#cdcdcd" stroke="#000" stroke-width="1" />
<polygon points="730.0,243.0 747.0,239.0 749.0,268.0" fill="#e6e6e6" stroke="#000" stroke-width="1" />
<line x1="748.0" y1="262.0" x2="806.0" y2="820.0" stroke="#000" stroke-width="1"/>
<polygon points="802.0,660.0 858.0,748.0 866.0,880.0 836.0,870.0 806.0,821.0" fill="#c9c9c9" stroke="#000" stroke-width="1" />
<line x1="813.0" y1="692.0" x2="838.0" y2="880.0" stroke="#000" stroke-width="1" stroke-dasharray="3,1.5"/>
<line x1="818.0" y1="692.0" x2="843.0" y2="880.0" stroke="#000" stroke-width="1" stroke-dasharray="3,1.5"/>
<line x1="841.5" y1="740.0" x2="861.5" y2="850.0" stroke="#000" stroke-width="1"/>
<line x1="845.0" y1="740.0" x2="865.0" y2="850.0" stroke="#000" stroke-width="1"/>
<line x1="805.0" y1="665.0" x2="859.0" y2="748.0" stroke="#000" stroke-width="1.5"/>
<polygon points="748.0,241.0 807.0,327.0 835.0,569.0 859.0,750.0 803.0,663.0 790.0,560.0 766.0,390.0" fill="#52b84e" stroke="#000" stroke-width="1" />
<line x1="749.0" y1="262.0" x2="790.0" y2="560.0" stroke="#000" stroke-width="1.5"/>
<line x1="790.0" y1="560.0" x2="803.0" y2="663.0" stroke="#000" stroke-width="1.5"/>
<line x1="779.6" y1="474.5" x2="804.0" y2="654.0" stroke="#000" stroke-width="1.3"/>
<line x1="807.0" y1="532.0" x2="832.0" y2="700.0" stroke="#000" stroke-width="1.3"/>
<polygon points="802.0,657.0 864.0,759.0 868.0,757.0 806.0,655.0" fill="#888" stroke="#000" stroke-width="1" /><line x1="804.0" y1="656.0" x2="866.0" y2="758.0" stroke="#000" stroke-width="1.7827673445597854"/><line x1="804.0" y1="656.0" x2="866.0" y2="758.0" stroke="#e8e8e8" stroke-width="0.8" stroke-dasharray="1.2,2.6"/>
<polygon points="763.0,343.0 815.0,428.0 819.0,426.0 767.0,341.0" fill="#999" stroke="#000" stroke-width="1" /><line x1="765.0" y1="342.0" x2="817.0" y2="427.0" stroke="#000" stroke-width="1.782338572942597"/><line x1="765.0" y1="342.0" x2="817.0" y2="427.0" stroke="#e8e8e8" stroke-width="0.8" stroke-dasharray="1.2,2.6"/>
<polygon points="779.0,479.0 834.0,568.0 838.0,566.0 783.0,477.0" fill="#999" stroke="#000" stroke-width="1" /><line x1="781.0" y1="478.0" x2="836.0" y2="567.0" stroke="#000" stroke-width="1.7816327451086176"/><line x1="781.0" y1="478.0" x2="836.0" y2="567.0" stroke="#e8e8e8" stroke-width="0.8" stroke-dasharray="1.2,2.6"/>
<polygon points="748.0,240.0 1007.0,199.0 1065.0,287.0 807.0,327.0" fill="#52b84e" stroke="#000" stroke-width="1" />
<polygon points="1000.0,199.0 1058.0,289.0 1031.0,290.0 1006.0,217.0" fill="#5e5e5e" stroke="none" stroke-width="1" />
<polygon points="953.0,226.0 1008.0,217.0 1022.0,244.0 1030.0,267.0 1031.0,289.0 961.0,299.0" fill="#c8c28f" stroke="#000" stroke-width="1" />
<polygon points="953.0,226.0 969.0,251.0 972.0,300.0 958.0,290.0" fill="#b8b27e" stroke="#000" stroke-width="1" />
<line x1="969.0" y1="251.0" x2="1022.0" y2="244.0" stroke="#000" stroke-width="1"/>
<line x1="985.0" y1="265.0" x2="987.0" y2="296.0" stroke="#000" stroke-width="1"/>
<polygon points="1030.0,262.0 1039.0,261.0 1042.0,288.0 1032.0,289.0" fill="#8e8e8e" stroke="#000" stroke-width="1" /><line x1="1033.0" y1="261.7" x2="1035.3" y2="288.7" stroke="#111" stroke-width="1.5"/><line x1="1036.0" y1="261.3" x2="1038.7" y2="288.3" stroke="#111" stroke-width="1.5"/>
<polygon points="747.0,239.0 1000.0,198.0 1002.0,214.0 749.0,255.0" fill="#9a9a9a" stroke="#000" stroke-width="1" /><line x1="747.4" y1="242.2" x2="1000.4" y2="201.2" stroke="#000" stroke-width="4.189611651553846"/><line x1="747.4" y1="242.2" x2="1000.4" y2="201.2" stroke="#e8e8e8" stroke-width="1.4663640780438458" stroke-dasharray="1.2,2.6"/><line x1="748.3" y1="249.6" x2="1001.3" y2="208.6" stroke="#000" stroke-width="4.189611651553846"/><line x1="748.3" y1="249.6" x2="1001.3" y2="208.6" stroke="#e8e8e8" stroke-width="1.4663640780438458" stroke-dasharray="1.2,2.6"/>
<polygon points="789.0,280.0 1023.0,244.0 1026.0,257.0 793.0,295.0" fill="#9a9a9a" stroke="#000" stroke-width="1" /><line x1="789.8" y1="283.0" x2="1023.6" y2="246.6" stroke="#000" stroke-width="4.012789092461506"/><line x1="789.8" y1="283.0" x2="1023.6" y2="246.6" stroke="#e8e8e8" stroke-width="1.4044761823615268" stroke-dasharray="1.2,2.6"/><line x1="791.6" y1="289.9" x2="1025.0" y2="252.6" stroke="#000" stroke-width="4.012789092461506"/><line x1="791.6" y1="289.9" x2="1025.0" y2="252.6" stroke="#e8e8e8" stroke-width="1.4044761823615268" stroke-dasharray="1.2,2.6"/>
<polygon points="747.0,239.0 763.0,239.0 821.0,326.0 806.0,326.0" fill="#a2a2a2" stroke="#000" stroke-width="1" /><line x1="750.2" y1="239.0" x2="809.0" y2="326.0" stroke="#111" stroke-width="1.1"/><line x1="753.4" y1="239.0" x2="812.0" y2="326.0" stroke="#111" stroke-width="1.1"/><line x1="756.6" y1="239.0" x2="815.0" y2="326.0" stroke="#111" stroke-width="1.1"/><line x1="759.8" y1="239.0" x2="818.0" y2="326.0" stroke="#111" stroke-width="1.1"/>
<polygon points="998.0,199.0 1011.0,198.0 1067.0,287.0 1054.0,288.0" fill="#a2a2a2" stroke="#000" stroke-width="1" /><line x1="1000.6" y1="198.8" x2="1056.6" y2="287.8" stroke="#111" stroke-width="1.1"/><line x1="1003.2" y1="198.6" x2="1059.2" y2="287.6" stroke="#111" stroke-width="1.1"/><line x1="1005.8" y1="198.4" x2="1061.8" y2="287.4" stroke="#111" stroke-width="1.1"/><line x1="1008.4" y1="198.2" x2="1064.4" y2="287.2" stroke="#111" stroke-width="1.1"/>
<polygon points="806.0,325.0 1062.0,285.0 1058.0,299.0 806.0,341.0" fill="#9a9a9a" stroke="#000" stroke-width="1" /><line x1="806.0" y1="328.2" x2="1061.2" y2="287.8" stroke="#000" stroke-width="4.1101300604045825"/><line x1="806.0" y1="328.2" x2="1061.2" y2="287.8" stroke="#e8e8e8" stroke-width="1.4385455211416038" stroke-dasharray="1.2,2.6"/><line x1="806.0" y1="335.6" x2="1059.4" y2="294.2" stroke="#000" stroke-width="4.1101300604045825"/><line x1="806.0" y1="335.6" x2="1059.4" y2="294.2" stroke="#e8e8e8" stroke-width="1.4385455211416038" stroke-dasharray="1.2,2.6"/>
<polygon points="819.0,341.0 1058.0,300.0 1085.0,530.0 1124.0,714.0 862.0,757.0 836.0,570.0" fill="#52b84e" stroke="#000" stroke-width="1" />
<polygon points="831.0,338.0 1046.0,305.0 1047.0,327.0 833.0,360.0" fill="none" stroke="#000" stroke-width="1" />
<polygon points="837.0,338.0 1039.0,308.0 1041.0,322.0 841.0,354.0" fill="#8c8cab" stroke="#000" stroke-width="1" />
<line x1="838.0" y1="341.0" x2="1039.0" y2="311.0" stroke="#000" stroke-width="3"/>
<line x1="840.0" y1="348.0" x2="1039.0" y2="317.0" stroke="#b8b8d8" stroke-width="3"/>
<line x1="841.0" y1="353.0" x2="1040.0" y2="322.0" stroke="#222" stroke-width="1.2"/>
<polygon points="874.0,305.0 916.0,300.0 917.0,310.0 878.0,317.0" fill="#c8c8dc" stroke="#000" stroke-width="1" />
<polygon points="895.0,355.0 910.0,353.0 911.0,357.0 896.0,359.0" fill="#eee" stroke="#444" stroke-width="0.6" />
</g>
</svg><svg class="abs" style="left:0;top:0" width="1920" height="1048" viewBox="0 0 1920 1048"><g stroke-linejoin="round">
<polygon points="888.0,760.0 1095.0,730.0 1115.0,914.0 907.0,937.0" fill="#d2d2d2" stroke="#000" stroke-width="1" />
<polygon points="890.0,778.0 956.0,770.0 974.0,903.0 908.0,922.0" fill="#a8a8a8" stroke="#000" stroke-width="1" />
<polygon points="926.0,776.0 956.0,770.0 972.0,888.0 962.0,880.0 944.0,820.0" fill="#c8c391" stroke="#000" stroke-width="1" />
<polygon points="894.0,786.0 945.0,779.0 960.0,822.0 896.0,830.0" fill="#b8b8b8" stroke="#000" stroke-width="0.8" />
<circle cx="917" cy="797" r="12" fill="#c8c8c8" stroke="#111" stroke-width="2.2"/><circle cx="917" cy="797" r="6" fill="#8a8a8a" stroke="#111" stroke-width="1.5"/>
<polygon points="902.0,810.0 912.0,808.0 914.0,826.0 904.0,828.0" fill="#e0e0e0" stroke="#000" stroke-width="0.6" />
<polygon points="935.0,800.0 948.0,798.0 952.0,820.0 938.0,822.0" fill="#d8d8d8" stroke="#000" stroke-width="0.6" />
<polygon points="895.0,823.0 963.0,815.0 964.0,828.0 896.0,836.0" fill="#5a5a5a" stroke="#000" stroke-width="1" />
<polygon points="901.0,837.0 953.0,829.0 955.0,845.0 903.0,846.0" fill="#c8c391" stroke="#000" stroke-width="0.8" />
<path d="M916,846 L916,837 Q925,830 937,834 L938,842" stroke="#9898c0" stroke-width="2.2" fill="none"/>
<polygon points="898.0,846.0 965.0,836.0 969.0,884.0 904.0,887.0" fill="#b0b0b0" stroke="#000" stroke-width="0.8" />
<circle cx="937" cy="864" r="11" fill="#c0c0c0" stroke="#111" stroke-width="2.2"/><circle cx="935" cy="862" r="5" fill="#777" stroke="#111" stroke-width="1.2"/>
<polygon points="908.0,870.0 920.0,868.0 922.0,884.0 910.0,886.0" fill="#e0e0e0" stroke="#000" stroke-width="0.6" />
<polygon points="904.0,886.0 969.0,883.0 971.0,896.0 906.0,901.0" fill="#5a5a5a" stroke="#000" stroke-width="1" />
<polygon points="907.0,902.0 971.0,896.0 974.0,905.0 908.0,918.0" fill="#c8c391" stroke="#000" stroke-width="0.8" />
<path d="M925,914 L925,906 Q933,900 946,903 L947,910" stroke="#9898c0" stroke-width="2.2" fill="none"/>
<polygon points="967.0,794.0 995.0,790.0 1000.0,796.0 972.0,800.0" fill="#777" stroke="#000" stroke-width="1" />
<polygon points="972.0,800.0 1000.0,796.0 1017.0,896.0 988.0,901.0" fill="#5c5c5c" stroke="#000" stroke-width="1" />
<polygon points="967.0,794.0 972.0,800.0 988.0,901.0 983.0,896.0" fill="#444" stroke="#000" stroke-width="1" />
<line x1="975.0" y1="815.0" x2="1002.0" y2="811.0" stroke="#000" stroke-width="1"/>
<text x="991" y="878" font-family="Liberation Sans" font-size="12" fill="none" stroke="#222" stroke-width="0.8" transform="rotate(-8 990 876)">UPS</text>
<polygon points="1006.0,759.0 1024.0,757.0 1041.0,890.0 1032.0,890.0" fill="#5e5e5e" stroke="#000" stroke-width="1" />
<polygon points="1000.0,760.0 1006.0,759.0 1032.0,890.0 1020.0,880.0" fill="#e0e0e0" stroke="none" stroke-width="1" />
<polygon points="1024.0,757.0 1083.0,751.0 1099.0,880.0 1041.0,890.0" fill="#5f5f5f" stroke="#000" stroke-width="1" />
<line x1="1031.0" y1="795.0" x2="1087.0" y2="788.0" stroke="#000" stroke-width="1.2"/>
<line x1="1035.0" y1="822.0" x2="1090.0" y2="815.0" stroke="#000" stroke-width="1.2"/>
<line x1="1036.0" y1="828.0" x2="1091.0" y2="821.0" stroke="#000" stroke-width="0.8"/>
<polygon points="1083.0,751.0 1094.0,748.0 1110.0,880.0 1099.0,880.0" fill="#e8e8e8" stroke="#000" stroke-width="1" />
<polygon points="907.0,917.0 1113.0,885.0 1116.0,902.0 910.0,938.0" fill="#cacaca" stroke="#000" stroke-width="1" />
<line x1="908.0" y1="926.0" x2="1114.0" y2="892.0" stroke="#000" stroke-width="1" stroke-dasharray="3,1.5"/>
<polygon points="836.0,870.0 866.0,876.0 910.0,938.0 890.0,946.0" fill="#d6d6d6" stroke="#000" stroke-width="1" />
<line x1="845.0" y1="872.0" x2="895.0" y2="944.0" stroke="#000" stroke-width="1"/>
<polygon points="862.0,757.0 1124.0,715.0 1120.0,732.0 889.0,778.0 866.0,776.0" fill="#cacaca" stroke="#000" stroke-width="1" />
<line x1="866.0" y1="766.0" x2="1120.0" y2="724.0" stroke="#fff" stroke-width="1.5"/>
<line x1="866.0" y1="764.0" x2="1120.0" y2="722.0" stroke="#000" stroke-width="1" stroke-dasharray="2,1.5"/>
<polygon points="866.0,759.0 888.0,759.0 912.0,952.0 885.0,952.0" fill="#c6c6c6" stroke="#000" stroke-width="1" />
<line x1="872.0" y1="760.0" x2="893.0" y2="952.0" stroke="#000" stroke-width="1" stroke-dasharray="3,1.5"/>
<line x1="883.0" y1="760.0" x2="906.0" y2="952.0" stroke="#000" stroke-width="1" stroke-dasharray="3,1.5"/>
<polygon points="1094.0,746.0 1115.0,730.0 1139.0,914.0 1115.0,914.0" fill="#c6c6c6" stroke="#000" stroke-width="1" />
<line x1="1100.0" y1="740.0" x2="1121.0" y2="914.0" stroke="#000" stroke-width="1" stroke-dasharray="3,1.5"/>
<line x1="1110.0" y1="735.0" x2="1133.0" y2="914.0" stroke="#000" stroke-width="1" stroke-dasharray="3,1.5"/>
<polygon points="1085.0,749.0 1092.0,747.0 1108.0,828.0 1102.0,830.0" fill="#f4f4f4" stroke="#000" stroke-width="1" />
<polygon points="881.0,955.0 911.0,951.0 918.0,956.0 918.0,965.0 889.0,967.0 882.0,961.0" fill="#d0d0d0" stroke="#000" stroke-width="1" /><line x1="887.0" y1="960.0" x2="917.0" y2="956.0" stroke="#000" stroke-width="1"/><polygon points="886.0,966.0 917.0,964.0 922.0,981.0 920.0,996.0 896.0,998.0 888.0,981.0" fill="#0a2a30" stroke="#000" stroke-width="1" /><path d="M889.0,969.0 L893.0,989.0 M895.0,968.0 L916.0,967.0 M917.0,969.0 L921.0,987.0 M891.0,975.0 L915.0,973.0" stroke="#10d8e0" stroke-width="1.6" stroke-dasharray="3,1.5" fill="none"/><ellipse cx="898.0" cy="985.0" rx="5.5" ry="13.0" fill="url(#wheelW)" stroke="#000" stroke-width="1"/><ellipse cx="909.0" cy="984.0" rx="6.0" ry="12.0" fill="url(#wheelP)" stroke="#000" stroke-width="1"/>
<polygon points="1111.0,915.0 1141.0,911.0 1148.0,916.0 1148.0,925.0 1119.0,927.0 1112.0,921.0" fill="#d0d0d0" stroke="#000" stroke-width="1" /><line x1="1117.0" y1="920.0" x2="1147.0" y2="916.0" stroke="#000" stroke-width="1"/><polygon points="1116.0,926.0 1147.0,924.0 1152.0,941.0 1150.0,956.0 1126.0,958.0 1118.0,941.0" fill="#0a2a30" stroke="#000" stroke-width="1" /><path d="M1119.0,929.0 L1123.0,949.0 M1125.0,928.0 L1146.0,927.0 M1147.0,929.0 L1151.0,947.0 M1121.0,935.0 L1145.0,933.0" stroke="#10d8e0" stroke-width="1.6" stroke-dasharray="3,1.5" fill="none"/><ellipse cx="1128.0" cy="945.0" rx="5.5" ry="13.0" fill="url(#wheelW)" stroke="#000" stroke-width="1"/><ellipse cx="1139.0" cy="944.0" rx="6.0" ry="12.0" fill="url(#wheelP)" stroke="#000" stroke-width="1"/>
<polygon points="831.0,881.1 854.4,878.0 859.9,881.9 859.9,888.9 837.2,890.5 831.8,885.8" fill="#d0d0d0" stroke="#000" stroke-width="1" /><line x1="835.7" y1="885.0" x2="859.1" y2="881.9" stroke="#000" stroke-width="1"/><polygon points="834.9,889.7 859.1,888.1 863.0,901.4 861.4,913.1 842.7,914.7 836.5,901.4" fill="#0a2a30" stroke="#000" stroke-width="1" /><path d="M837.24,892.04 L840.36,907.64 M841.92,891.26 L858.3,890.48 M859.08,892.04 L862.2,906.08 M838.8,896.72 L857.52,895.16" stroke="#10d8e0" stroke-width="1.6" stroke-dasharray="3,1.5" fill="none"/><ellipse cx="844.26" cy="904.52" rx="4.29" ry="10.14" fill="url(#wheelW)" stroke="#000" stroke-width="1"/><ellipse cx="852.84" cy="903.74" rx="4.68" ry="9.36" fill="url(#wheelP)" stroke="#000" stroke-width="1"/>
<ellipse cx="853" cy="914" rx="9" ry="3.5" fill="#ddd" stroke="#000"/>
<polygon points="1092.0,716.0 1119.0,714.0 1117.0,725.0 1094.0,727.0" fill="#c8c090" stroke="#000" stroke-width="1" />
<circle cx="1104" cy="734" r="8.5" fill="#d8d8e0" stroke="#000"/><ellipse cx="1104" cy="739" rx="8" ry="3.5" fill="#8a6a50" opacity="0.8"/>
</g></svg><svg class="abs" style="left:0;top:0" width="1920" height="1048" viewBox="0 0 1920 1048">
<defs><linearGradient id="wm" x1="0" y1="0" x2="0" y2="1"><stop offset="0" stop-color="#f07010"/><stop offset="1" stop-color="#f8a020"/></linearGradient><radialGradient id="gbtn" cx="0.4" cy="0.35" r="0.7"><stop offset="0" stop-color="#6af06a"/><stop offset="1" stop-color="#0a6a2a"/></radialGradient></defs>
<g stroke-linejoin="round">
<polygon points="850.0,566.0 1090.0,528.0 1110.0,705.0 876.0,748.0" fill="#52b84e" stroke="none" stroke-width="1" />
<polygon points="1041.7,551.7 1054.4,551.7 1067.0,624.2 1052.6,626.0" fill="#8e8e8e" stroke="#000" stroke-width="1" /><line x1="1044.9" y1="551.7" x2="1056.2" y2="625.5" stroke="#111" stroke-width="1.8"/><line x1="1048.1" y1="551.7" x2="1059.8" y2="625.1" stroke="#111" stroke-width="1.8"/><line x1="1051.2" y1="551.7" x2="1063.4" y2="624.7" stroke="#111" stroke-width="1.8"/>
<polygon points="1065.0,541.0 1085.0,539.0 1108.0,698.0 1096.0,700.0" fill="#8e8e8e" stroke="#000" stroke-width="1" /><line x1="1069.0" y1="540.6" x2="1098.4" y2="699.6" stroke="#111" stroke-width="1.8"/><line x1="1073.0" y1="540.2" x2="1100.8" y2="699.2" stroke="#111" stroke-width="1.8"/><line x1="1077.0" y1="539.8" x2="1103.2" y2="698.8" stroke="#111" stroke-width="1.8"/><line x1="1081.0" y1="539.4" x2="1105.6" y2="698.4" stroke="#111" stroke-width="1.8"/>
<polygon points="1000.0,617.0 1053.0,611.0 1055.0,631.0 1002.0,637.0" fill="#8a8a8a" stroke="#000" stroke-width="1" />
<line x1="1000.0" y1="622.0" x2="1053.0" y2="616.0" stroke="#111" stroke-width="2.2" stroke-dasharray="2,1.5"/>
<line x1="1001.0" y1="630.0" x2="1054.0" y2="624.0" stroke="#111" stroke-width="1.5"/>
<polygon points="1027.0,549.0 1066.0,543.0 1066.0,551.0 1027.0,557.0" fill="#c9c48e" stroke="#000" stroke-width="1" />
<polygon points="997.0,555.0 1027.0,548.0 1031.0,583.0 1000.0,590.0" fill="#c9c48e" stroke="#000" stroke-width="1" />
<polygon points="860.0,573.0 892.0,569.0 916.0,742.0 884.0,748.0" fill="#cdcdcd" stroke="#000" stroke-width="1" />
<line x1="866.0" y1="575.0" x2="889.0" y2="745.0" stroke="#000" stroke-width="0.8"/>
<line x1="880.0" y1="571.0" x2="904.0" y2="744.0" stroke="#000" stroke-width="0.8"/>
<polygon points="982.0,575.0 1000.0,572.0 1014.0,700.0 998.0,702.0" fill="#d0d0d0" stroke="#000" stroke-width="1" />
<line x1="990.0" y1="574.0" x2="1005.0" y2="700.0" stroke="#000" stroke-width="0.8"/>
<polygon points="850.0,566.0 1000.0,545.0 1002.0,560.0 852.0,582.0" fill="#cfcfcf" stroke="#000" stroke-width="1" />
<polygon points="891.0,570.0 991.0,556.0 993.0,582.0 893.0,589.0" fill="#9c9cb8" stroke="#000" stroke-width="1" />
<polygon points="885.0,590.0 984.0,582.0 990.0,690.0 905.0,700.0" fill="#7a7a7a" stroke="#000" stroke-width="1" />
<polygon points="893.0,591.0 929.0,588.0 930.0,608.0 895.0,611.0" fill="#5a5a5a" stroke="#000" stroke-width="1" />
<polygon points="880.0,608.0 929.0,604.0 930.0,619.0 882.0,622.0" fill="#cfcfcf" stroke="#000" stroke-width="1" />
<polygon points="885.0,617.0 922.0,614.0 923.0,644.0 888.0,647.0" fill="#5e5e5e" stroke="#000" stroke-width="1" />
<polygon points="892.0,621.0 920.0,618.0 921.0,640.0 894.0,642.0" fill="#909898" stroke="#000" stroke-width="1" />
<polygon points="922.0,637.0 962.0,633.0 963.0,662.0 923.0,666.0" fill="#c4c4c4" stroke="#000" stroke-width="1" />
<line x1="925.0" y1="645.0" x2="960.0" y2="641.0" stroke="#000" stroke-width="1"/>
<line x1="925.0" y1="653.0" x2="960.0" y2="649.0" stroke="#000" stroke-width="1"/>
<polygon points="927.0,594.0 964.0,591.0 966.0,633.0 930.0,636.0" fill="#6a6a6a" stroke="#000" stroke-width="1" />
<line x1="938.0" y1="594.0" x2="941.0" y2="636.0" stroke="#111" stroke-width="2"/>
<line x1="955.0" y1="592.0" x2="958.0" y2="634.0" stroke="#111" stroke-width="1.5"/>
<rect x="943" y="611" width="6" height="21" fill="#f08010"/>
<polygon points="930.0,628.0 962.0,625.0 965.0,634.0 938.0,638.0" fill="#f0a040" stroke="#000" stroke-width="1" />
<polygon points="925.0,585.0 975.0,580.0 977.0,589.0 927.0,594.0" fill="#c8a8a0" stroke="#000" stroke-width="0.8" />
<ellipse cx="918" cy="628" rx="10" ry="9" fill="#c8a8a0" stroke="#000"/>
<polygon points="962.0,630.0 985.0,628.0 990.0,690.0 965.0,690.0" fill="#8a8a8a" stroke="#000" stroke-width="1" />
<ellipse cx="970" cy="648" rx="6" ry="10" fill="#aaa" stroke="#000"/><ellipse cx="970" cy="648" rx="3" ry="6" fill="#333"/>
<polygon points="963.0,606.0 984.0,603.0 985.0,622.0 964.0,624.0" fill="#52b84e" stroke="none" stroke-width="1" />
<polygon points="970.0,596.0 985.0,592.0 986.0,610.0 972.0,614.0" fill="#4a5a10" stroke="#000" stroke-width="1" />
<polygon points="918.0,659.0 954.0,656.0 962.0,686.0 922.0,690.0" fill="#2e7a30" stroke="#000" stroke-width="1" />
<polygon points="954.0,656.0 962.0,658.0 966.0,686.0 962.0,688.0" fill="#1a4a1a" stroke="#000" stroke-width="1" />
<polygon points="966.0,662.0 980.0,661.0 982.0,678.0 988.0,684.0 964.0,688.0" fill="#1f8c8c" stroke="#000" stroke-width="1" />
<path d="M893,660 L915,700 M880,682 L900,720" stroke="#fff" stroke-width="2.2" fill="none"/>
<path d="M1003,650 L1015,640 L1018,660" stroke="#fff" stroke-width="3" fill="none"/>
<path d="M864,600 L885,597 M866,612 L882,608 M866,640 L874,640" stroke="#a89860" stroke-width="2" fill="none"/>
<path d="M902,655 L912,652 L913,660" stroke="#e8d800" stroke-width="2" fill="none"/>
<polygon points="906.0,660.0 918.0,658.0 919.0,668.0 908.0,670.0" fill="#9a9ac0" stroke="none" stroke-width="1" />
<path d="M892,686 L896,700" stroke="#d00" stroke-width="2.5"/>
<polygon points="1009.0,638.0 1075.0,626.0 1094.0,686.0 1027.0,695.0" fill="#ececec" stroke="#000" stroke-width="1" />
<ellipse cx="1051" cy="659" rx="4" ry="2" fill="#fff" stroke="#000"/><ellipse cx="1071" cy="655" rx="4" ry="2" fill="#fff" stroke="#000"/>
<polygon points="876.0,732.0 1010.0,678.0 1100.0,690.0 1124.0,716.0 862.0,757.0" fill="#5a5a5a" stroke="#000" stroke-width="1" />
<polygon points="900.0,690.0 1010.0,676.0 1012.0,692.0 905.0,708.0" fill="#787878" stroke="#000" stroke-width="1" />
<polygon points="1030.0,694.0 1096.0,686.0 1110.0,708.0 1040.0,716.0" fill="#8c8c8c" stroke="#000" stroke-width="1" />
<polygon points="1035.0,706.0 1095.0,698.0 1096.0,708.0 1037.0,714.0" fill="#c8c8c8" stroke="#000" stroke-width="1" />
<ellipse cx="1040" cy="716" rx="12" ry="8" fill="#4a4a4a" stroke="#000"/><circle cx="1042" cy="710" r="3" fill="#c00"/>
<polygon points="910.0,710.0 935.0,706.0 945.0,738.0 918.0,742.0" fill="#555" stroke="#000" stroke-width="1" />
<polygon points="938.0,699.0 993.0,694.0 997.0,726.0 944.0,734.0" fill="#8aab12" stroke="#000" stroke-width="1" />
<polygon points="869.0,688.0 888.0,686.0 894.0,730.0 875.0,732.0" fill="#c9c48e" stroke="#000" stroke-width="1" />
<polygon points="834.0,568.0 853.0,568.0 871.0,756.0 857.0,758.0" fill="#c9bf00" stroke="#000" stroke-width="1" />
<line x1="838.0" y1="570.0" x2="861.0" y2="757.0" stroke="#000" stroke-width="1" stroke-dasharray="4,2"/>
<rect x="846" y="600" width="6" height="7" fill="#222"/><rect x="866" y="735" width="6" height="8" fill="#222"/>
<polygon points="1086.0,530.0 1101.0,527.0 1126.0,715.0 1110.0,717.0" fill="#c9bf00" stroke="#000" stroke-width="1" />
<line x1="1089.0" y1="531.0" x2="1113.0" y2="716.0" stroke="#000" stroke-width="1" stroke-dasharray="4,2"/>
<rect x="1094" y="555" width="6" height="7" fill="#222"/><rect x="1110" y="688" width="6" height="7" fill="#222"/>
<polygon points="803.0,327.0 817.0,326.0 851.0,569.0 834.0,569.0" fill="#8e8e8e" stroke="#000" stroke-width="1" /><line x1="806.5" y1="326.8" x2="838.2" y2="569.0" stroke="#111" stroke-width="1.6"/><line x1="810.0" y1="326.5" x2="842.5" y2="569.0" stroke="#111" stroke-width="1.6"/><line x1="813.5" y1="326.2" x2="846.8" y2="569.0" stroke="#111" stroke-width="1.6"/>
<polygon points="1056.0,289.0 1066.0,287.0 1087.0,400.0 1076.0,400.0" fill="#8e8e8e" stroke="#000" stroke-width="1" /><line x1="1059.3" y1="288.3" x2="1079.7" y2="400.0" stroke="#111" stroke-width="1.6"/><line x1="1062.7" y1="287.7" x2="1083.3" y2="400.0" stroke="#111" stroke-width="1.6"/>
<polygon points="836.0,372.0 978.0,349.0 992.0,461.0 848.0,484.0" fill="#a2a2a2" stroke="#000" stroke-width="1" />
<polygon points="844.0,380.0 974.0,358.0 985.0,453.0 855.0,473.0" fill="#8c8c8c" stroke="#000" stroke-width="1" />
<line x1="836.0" y1="372.0" x2="978.0" y2="349.0" stroke="#000" stroke-width="2.5" stroke-dasharray="2,1.5"/>
<line x1="850.0" y1="470.0" x2="975.0" y2="452.0" stroke="#000" stroke-width="1"/>
<polygon points="840.0,486.0 998.0,462.0 1009.0,549.0 851.0,569.0" fill="#c8c8c8" stroke="#000" stroke-width="1" />
<polygon points="852.0,498.0 968.0,478.0 978.0,545.0 861.0,564.0" fill="#cccccc" stroke="#000" stroke-width="1" />
<line x1="852.0" y1="499.0" x2="968.0" y2="479.0" stroke="#fff" stroke-width="1.2"/>
<polygon points="865.0,512.0 960.0,497.0 966.0,545.0 870.0,560.0" fill="#2e6e2e" stroke="#000" stroke-width="1" />
<rect x="866.9" y="515.4" width="6.2" height="6" fill="#707070" stroke="#111" stroke-width="0.9" transform="rotate(-9 870.0 518.4)"/>
<rect x="873.5" y="514.3" width="6.2" height="6" fill="#707070" stroke="#111" stroke-width="0.9" transform="rotate(-9 876.6 517.3)"/>
<rect x="880.2" y="513.2" width="6.2" height="6" fill="#707070" stroke="#111" stroke-width="0.9" transform="rotate(-9 883.3 516.2)"/>
<rect x="886.8" y="512.2" width="6.2" height="6" fill="#707070" stroke="#111" stroke-width="0.9" transform="rotate(-9 889.9 515.2)"/>
<rect x="926.7" y="505.7" width="6.2" height="6" fill="#707070" stroke="#111" stroke-width="0.9" transform="rotate(-9 929.8 508.7)"/>
<rect x="933.3" y="504.7" width="6.2" height="6" fill="#707070" stroke="#111" stroke-width="0.9" transform="rotate(-9 936.4 507.7)"/>
<rect x="940.0" y="503.6" width="6.2" height="6" fill="#707070" stroke="#111" stroke-width="0.9" transform="rotate(-9 943.1 506.6)"/>
<rect x="946.6" y="502.5" width="6.2" height="6" fill="#707070" stroke="#111" stroke-width="0.9" transform="rotate(-9 949.7 505.5)"/>
<rect x="953.3" y="501.4" width="6.2" height="6" fill="#707070" stroke="#111" stroke-width="0.9" transform="rotate(-9 956.4 504.4)"/>
<rect x="867.7" y="522.5" width="6.2" height="6" fill="#707070" stroke="#111" stroke-width="0.9" transform="rotate(-9 870.8 525.5)"/>
<rect x="874.3" y="521.4" width="6.2" height="6" fill="#707070" stroke="#111" stroke-width="0.9" transform="rotate(-9 877.4 524.4)"/>
<rect x="880.9" y="520.4" width="6.2" height="6" fill="#707070" stroke="#111" stroke-width="0.9" transform="rotate(-9 884.0 523.4)"/>
<rect x="887.6" y="519.3" width="6.2" height="6" fill="#707070" stroke="#111" stroke-width="0.9" transform="rotate(-9 890.7 522.3)"/>
<rect x="894.2" y="518.2" width="6.2" height="6" fill="#707070" stroke="#111" stroke-width="0.9" transform="rotate(-9 897.3 521.2)"/>
<rect x="900.9" y="517.1" width="6.2" height="6" fill="#707070" stroke="#111" stroke-width="0.9" transform="rotate(-9 904.0 520.1)"/>
<rect x="907.5" y="516.1" width="6.2" height="6" fill="#707070" stroke="#111" stroke-width="0.9" transform="rotate(-9 910.6 519.1)"/>
<rect x="914.2" y="515.0" width="6.2" height="6" fill="#707070" stroke="#111" stroke-width="0.9" transform="rotate(-9 917.3 518.0)"/>
<rect x="920.8" y="513.9" width="6.2" height="6" fill="#707070" stroke="#111" stroke-width="0.9" transform="rotate(-9 923.9 516.9)"/>
<rect x="927.4" y="512.9" width="6.2" height="6" fill="#707070" stroke="#111" stroke-width="0.9" transform="rotate(-9 930.5 515.9)"/>
<rect x="934.1" y="511.8" width="6.2" height="6" fill="#707070" stroke="#111" stroke-width="0.9" transform="rotate(-9 937.2 514.8)"/>
<rect x="940.7" y="510.7" width="6.2" height="6" fill="#707070" stroke="#111" stroke-width="0.9" transform="rotate(-9 943.8 513.7)"/>
<rect x="947.4" y="509.6" width="6.2" height="6" fill="#707070" stroke="#111" stroke-width="0.9" transform="rotate(-9 950.5 512.6)"/>
<rect x="954.0" y="508.6" width="6.2" height="6" fill="#707070" stroke="#111" stroke-width="0.9" transform="rotate(-9 957.1 511.6)"/>
<rect x="868.4" y="529.6" width="6.2" height="6" fill="#707070" stroke="#111" stroke-width="0.9" transform="rotate(-9 871.5 532.6)"/>
<rect x="875.1" y="528.5" width="6.2" height="6" fill="#707070" stroke="#111" stroke-width="0.9" transform="rotate(-9 878.2 531.5)"/>
<rect x="881.7" y="527.5" width="6.2" height="6" fill="#707070" stroke="#111" stroke-width="0.9" transform="rotate(-9 884.8 530.5)"/>
<rect x="888.3" y="526.4" width="6.2" height="6" fill="#707070" stroke="#111" stroke-width="0.9" transform="rotate(-9 891.4 529.4)"/>
<rect x="895.0" y="525.3" width="6.2" height="6" fill="#707070" stroke="#111" stroke-width="0.9" transform="rotate(-9 898.1 528.3)"/>
<rect x="901.6" y="524.3" width="6.2" height="6" fill="#707070" stroke="#111" stroke-width="0.9" transform="rotate(-9 904.7 527.3)"/>
<rect x="908.3" y="523.2" width="6.2" height="6" fill="#707070" stroke="#111" stroke-width="0.9" transform="rotate(-9 911.4 526.2)"/>
<rect x="914.9" y="522.1" width="6.2" height="6" fill="#707070" stroke="#111" stroke-width="0.9" transform="rotate(-9 918.0 525.1)"/>
<rect x="921.6" y="521.0" width="6.2" height="6" fill="#707070" stroke="#111" stroke-width="0.9" transform="rotate(-9 924.7 524.0)"/>
<rect x="928.2" y="520.0" width="6.2" height="6" fill="#707070" stroke="#111" stroke-width="0.9" transform="rotate(-9 931.3 523.0)"/>
<rect x="934.8" y="518.9" width="6.2" height="6" fill="#707070" stroke="#111" stroke-width="0.9" transform="rotate(-9 937.9 521.9)"/>
<rect x="941.5" y="517.8" width="6.2" height="6" fill="#707070" stroke="#111" stroke-width="0.9" transform="rotate(-9 944.6 520.8)"/>
<rect x="948.1" y="516.8" width="6.2" height="6" fill="#707070" stroke="#111" stroke-width="0.9" transform="rotate(-9 951.2 519.8)"/>
<rect x="954.8" y="515.7" width="6.2" height="6" fill="#707070" stroke="#111" stroke-width="0.9" transform="rotate(-9 957.9 518.7)"/>
<rect x="869.2" y="536.7" width="6.2" height="6" fill="#707070" stroke="#111" stroke-width="0.9" transform="rotate(-9 872.3 539.7)"/>
<rect x="875.8" y="535.7" width="6.2" height="6" fill="#707070" stroke="#111" stroke-width="0.9" transform="rotate(-9 878.9 538.7)"/>
<rect x="882.5" y="534.6" width="6.2" height="6" fill="#707070" stroke="#111" stroke-width="0.9" transform="rotate(-9 885.6 537.6)"/>
<rect x="889.1" y="533.5" width="6.2" height="6" fill="#707070" stroke="#111" stroke-width="0.9" transform="rotate(-9 892.2 536.5)"/>
<rect x="895.7" y="532.5" width="6.2" height="6" fill="#707070" stroke="#111" stroke-width="0.9" transform="rotate(-9 898.8 535.5)"/>
<rect x="902.4" y="531.4" width="6.2" height="6" fill="#707070" stroke="#111" stroke-width="0.9" transform="rotate(-9 905.5 534.4)"/>
<rect x="909.0" y="530.3" width="6.2" height="6" fill="#707070" stroke="#111" stroke-width="0.9" transform="rotate(-9 912.1 533.3)"/>
<rect x="915.7" y="529.2" width="6.2" height="6" fill="#707070" stroke="#111" stroke-width="0.9" transform="rotate(-9 918.8 532.2)"/>
<rect x="922.3" y="528.2" width="6.2" height="6" fill="#707070" stroke="#111" stroke-width="0.9" transform="rotate(-9 925.4 531.2)"/>
<rect x="929.0" y="527.1" width="6.2" height="6" fill="#707070" stroke="#111" stroke-width="0.9" transform="rotate(-9 932.1 530.1)"/>
<rect x="935.6" y="526.0" width="6.2" height="6" fill="#707070" stroke="#111" stroke-width="0.9" transform="rotate(-9 938.7 529.0)"/>
<rect x="942.2" y="525.0" width="6.2" height="6" fill="#707070" stroke="#111" stroke-width="0.9" transform="rotate(-9 945.3 528.0)"/>
<rect x="948.9" y="523.9" width="6.2" height="6" fill="#707070" stroke="#111" stroke-width="0.9" transform="rotate(-9 952.0 526.9)"/>
<rect x="955.5" y="522.8" width="6.2" height="6" fill="#707070" stroke="#111" stroke-width="0.9" transform="rotate(-9 958.6 525.8)"/>
<rect x="869.9" y="543.9" width="6.2" height="6" fill="#707070" stroke="#111" stroke-width="0.9" transform="rotate(-9 873.0 546.9)"/>
<rect x="876.6" y="542.8" width="6.2" height="6" fill="#707070" stroke="#111" stroke-width="0.9" transform="rotate(-9 879.7 545.8)"/>
<rect x="883.2" y="541.7" width="6.2" height="6" fill="#707070" stroke="#111" stroke-width="0.9" transform="rotate(-9 886.3 544.7)"/>
<rect x="889.9" y="540.6" width="6.2" height="6" fill="#707070" stroke="#111" stroke-width="0.9" transform="rotate(-9 893.0 543.6)"/>
<rect x="896.5" y="539.6" width="6.2" height="6" fill="#707070" stroke="#111" stroke-width="0.9" transform="rotate(-9 899.6 542.6)"/>
<rect x="903.1" y="538.5" width="6.2" height="6" fill="#707070" stroke="#111" stroke-width="0.9" transform="rotate(-9 906.2 541.5)"/>
<rect x="909.8" y="537.4" width="6.2" height="6" fill="#707070" stroke="#111" stroke-width="0.9" transform="rotate(-9 912.9 540.4)"/>
<rect x="916.4" y="536.4" width="6.2" height="6" fill="#707070" stroke="#111" stroke-width="0.9" transform="rotate(-9 919.5 539.4)"/>
<rect x="923.1" y="535.3" width="6.2" height="6" fill="#707070" stroke="#111" stroke-width="0.9" transform="rotate(-9 926.2 538.3)"/>
<rect x="929.7" y="534.2" width="6.2" height="6" fill="#707070" stroke="#111" stroke-width="0.9" transform="rotate(-9 932.8 537.2)"/>
<rect x="936.4" y="533.1" width="6.2" height="6" fill="#707070" stroke="#111" stroke-width="0.9" transform="rotate(-9 939.5 536.1)"/>
<rect x="943.0" y="532.1" width="6.2" height="6" fill="#707070" stroke="#111" stroke-width="0.9" transform="rotate(-9 946.1 535.1)"/>
<rect x="949.6" y="531.0" width="6.2" height="6" fill="#707070" stroke="#111" stroke-width="0.9" transform="rotate(-9 952.7 534.0)"/>
<rect x="956.3" y="529.9" width="6.2" height="6" fill="#707070" stroke="#111" stroke-width="0.9" transform="rotate(-9 959.4 532.9)"/>
<rect x="870.7" y="551.0" width="6.2" height="6" fill="#707070" stroke="#111" stroke-width="0.9" transform="rotate(-9 873.8 554.0)"/>
<rect x="877.3" y="549.9" width="6.2" height="6" fill="#707070" stroke="#111" stroke-width="0.9" transform="rotate(-9 880.4 552.9)"/>
<rect x="884.0" y="548.8" width="6.2" height="6" fill="#707070" stroke="#111" stroke-width="0.9" transform="rotate(-9 887.1 551.8)"/>
<rect x="890.6" y="547.8" width="6.2" height="6" fill="#707070" stroke="#111" stroke-width="0.9" transform="rotate(-9 893.7 550.8)"/>
<rect x="897.3" y="546.7" width="6.2" height="6" fill="#707070" stroke="#111" stroke-width="0.9" transform="rotate(-9 900.4 549.7)"/>
<rect x="903.9" y="545.6" width="6.2" height="6" fill="#707070" stroke="#111" stroke-width="0.9" transform="rotate(-9 907.0 548.6)"/>
<rect x="910.5" y="544.6" width="6.2" height="6" fill="#707070" stroke="#111" stroke-width="0.9" transform="rotate(-9 913.6 547.6)"/>
<rect x="917.2" y="543.5" width="6.2" height="6" fill="#707070" stroke="#111" stroke-width="0.9" transform="rotate(-9 920.3 546.5)"/>
<rect x="923.8" y="542.4" width="6.2" height="6" fill="#707070" stroke="#111" stroke-width="0.9" transform="rotate(-9 926.9 545.4)"/>
<rect x="930.5" y="541.3" width="6.2" height="6" fill="#707070" stroke="#111" stroke-width="0.9" transform="rotate(-9 933.6 544.3)"/>
<rect x="937.1" y="540.3" width="6.2" height="6" fill="#707070" stroke="#111" stroke-width="0.9" transform="rotate(-9 940.2 543.3)"/>
<rect x="943.8" y="539.2" width="6.2" height="6" fill="#707070" stroke="#111" stroke-width="0.9" transform="rotate(-9 946.9 542.2)"/>
<rect x="950.4" y="538.1" width="6.2" height="6" fill="#707070" stroke="#111" stroke-width="0.9" transform="rotate(-9 953.5 541.1)"/>
<rect x="957.0" y="537.1" width="6.2" height="6" fill="#707070" stroke="#111" stroke-width="0.9" transform="rotate(-9 960.1 540.1)"/>
<polygon points="864.0,488.0 879.0,486.0 880.0,501.0 865.0,503.0" fill="#2e8a3e" stroke="#000" stroke-width="1" />
<polygon points="939.0,476.0 956.0,474.0 957.0,489.0 940.0,491.0" fill="#2e8a3e" stroke="#000" stroke-width="1" />
<circle cx="955" cy="504" r="2.5" fill="#777" stroke="#000" stroke-width="0.6"/>
<circle cx="990" cy="519" r="8" fill="url(#gbtn)" stroke="#000"/>
<circle cx="862" cy="550" r="3" fill="#ddd" stroke="#000" stroke-width="0.7"/>
<polygon points="991.0,399.0 1066.0,389.0 1067.0,401.0 992.0,412.0" fill="#8a8a8a" stroke="#000" stroke-width="1" /><line x1="991.5" y1="405.5" x2="1066.5" y2="395.0" stroke="#000" stroke-width="5.2072505715861075"/><line x1="991.5" y1="405.5" x2="1066.5" y2="395.0" stroke="#e8e8e8" stroke-width="1.8225377000551375" stroke-dasharray="1.2,2.6"/>
<polygon points="1066.0,389.0 1082.0,385.0 1097.0,400.0 1068.0,402.0" fill="#d6d6e2" stroke="#000" stroke-width="1" />
<polygon points="993.0,412.0 1097.0,399.0 1115.0,523.0 1009.0,539.0" fill="#c2c2d2" stroke="#000" stroke-width="1" />
<line x1="994.0" y1="415.0" x2="1097.0" y2="401.0" stroke="#000" stroke-width="2" stroke-dasharray="2,1.5"/>
<polygon points="1003.0,445.0 1098.0,430.0 1108.0,494.0 1011.0,507.0" fill="#b4b4c2" stroke="#000" stroke-width="1" />
<polygon points="1008.0,451.0 1094.0,437.0 1102.0,489.0 1015.0,500.0" fill="#a6a6a8" stroke="#000" stroke-width="1" />
<ellipse cx="1016.0" cy="459.0" rx="1.8" ry="1.2" fill="#111"/>
<ellipse cx="1016.8" cy="464.5" rx="1.8" ry="1.2" fill="#111"/>
<ellipse cx="1017.6" cy="470.0" rx="1.8" ry="1.2" fill="#111"/>
<ellipse cx="1018.4" cy="475.5" rx="1.8" ry="1.2" fill="#111"/>
<ellipse cx="1019.2" cy="481.0" rx="1.8" ry="1.2" fill="#111"/>
<ellipse cx="1020.0" cy="486.5" rx="1.8" ry="1.2" fill="#111"/>
<ellipse cx="1078.0" cy="444.0" rx="1.8" ry="1.2" fill="#111"/>
<ellipse cx="1083.0" cy="443.2" rx="1.8" ry="1.2" fill="#111"/>
<ellipse cx="1088.0" cy="442.4" rx="1.8" ry="1.2" fill="#111"/>
<ellipse cx="1078.9" cy="449.5" rx="1.8" ry="1.2" fill="#111"/>
<ellipse cx="1083.9" cy="448.7" rx="1.8" ry="1.2" fill="#111"/>
<ellipse cx="1088.9" cy="447.9" rx="1.8" ry="1.2" fill="#111"/>
<ellipse cx="1079.8" cy="455.0" rx="1.8" ry="1.2" fill="#111"/>
<ellipse cx="1084.8" cy="454.2" rx="1.8" ry="1.2" fill="#111"/>
<ellipse cx="1089.8" cy="453.4" rx="1.8" ry="1.2" fill="#111"/>
<ellipse cx="1080.7" cy="460.5" rx="1.8" ry="1.2" fill="#111"/>
<ellipse cx="1085.7" cy="459.7" rx="1.8" ry="1.2" fill="#111"/>
<ellipse cx="1090.7" cy="458.9" rx="1.8" ry="1.2" fill="#111"/>
<ellipse cx="1081.6" cy="466.0" rx="1.8" ry="1.2" fill="#111"/>
<ellipse cx="1086.6" cy="465.2" rx="1.8" ry="1.2" fill="#111"/>
<ellipse cx="1091.6" cy="464.4" rx="1.8" ry="1.2" fill="#111"/>
<ellipse cx="1082.5" cy="471.5" rx="1.8" ry="1.2" fill="#111"/>
<ellipse cx="1087.5" cy="470.7" rx="1.8" ry="1.2" fill="#111"/>
<ellipse cx="1092.5" cy="469.9" rx="1.8" ry="1.2" fill="#111"/>
<ellipse cx="1083.4" cy="477.0" rx="1.8" ry="1.2" fill="#111"/>
<ellipse cx="1088.4" cy="476.2" rx="1.8" ry="1.2" fill="#111"/>
<ellipse cx="1093.4" cy="475.4" rx="1.8" ry="1.2" fill="#111"/>
<rect x="1027.0" y="494.0" width="5" height="3" fill="#222" transform="rotate(-8 1029.0 495.0)"/>
<rect x="1035.0" y="492.8" width="5" height="3" fill="#222" transform="rotate(-8 1037.0 493.8)"/>
<rect x="1043.0" y="491.6" width="5" height="3" fill="#222" transform="rotate(-8 1045.0 492.6)"/>
<rect x="1051.0" y="490.4" width="5" height="3" fill="#222" transform="rotate(-8 1053.0 491.4)"/>
<rect x="1059.0" y="489.2" width="5" height="3" fill="#222" transform="rotate(-8 1061.0 490.2)"/>
<circle cx="1001" cy="429" r="3" fill="none" stroke="#222" stroke-width="1"/>
<circle cx="1035" cy="522" r="5" fill="#aaa" stroke="#000" stroke-width="1.2"/>
<circle cx="1050" cy="517" r="5" fill="#18a040" stroke="#000" stroke-width="1.2"/>
<circle cx="1066" cy="515" r="5" fill="#c80010" stroke="#000" stroke-width="1.2"/>
<circle cx="1081" cy="511" r="5" fill="#8a8010" stroke="#000" stroke-width="1.2"/>
<circle cx="1097" cy="508" r="5" fill="#888" stroke="#000" stroke-width="1.2"/>
<line x1="1009.0" y1="537.0" x2="1112.0" y2="522.0" stroke="#000" stroke-width="2" stroke-dasharray="2,1.5"/>
<polygon points="1100.0,415.0 1104.0,414.0 1106.0,428.0 1102.0,429.0" fill="#ddd" stroke="#000" stroke-width="0.7" />
<polygon points="1113.0,505.0 1117.0,504.0 1118.0,518.0 1114.0,519.0" fill="#ddd" stroke="#000" stroke-width="0.7" />
<g opacity="0.95">
<path d="M893,538 L892,513 M897,540 L897,508 M901,537 L901,516 M926,537 L926,516 M930,540 L930,508 M934,538 L935,513" stroke="url(#wm)" stroke-width="2.2" fill="none"/>
<path d="M892,539 Q905,532 913,541 Q921,532 935,539" stroke="#f49020" stroke-width="2" fill="none"/>
<path d="M910,511 Q900,522 907,533 Q914,541 921,530 Q925,520 917,514 Q923,524 915,531 Q908,524 914,512 Z" fill="url(#wm)"/>
<line x1="947.0" y1="515.9" x2="959.3" y2="515.9" stroke="#f48a20" stroke-width="1.7"/><line x1="947.9" y1="520.6" x2="958.4" y2="520.6" stroke="#f48a20" stroke-width="1.7"/><line x1="947.0" y1="526.4" x2="960.2" y2="526.4" stroke="#f48a20" stroke-width="1.7"/><line x1="950.8" y1="515.0" x2="950.8" y2="528.2" stroke="#f48a20" stroke-width="1.7"/><line x1="956.5" y1="516.9" x2="956.5" y2="528.2" stroke="#f48a20" stroke-width="1.7"/>
<line x1="964.5" y1="516.5" x2="970.2" y2="516.5" stroke="#f48a20" stroke-width="1.7"/><line x1="963.6" y1="521.2" x2="971.1" y2="521.2" stroke="#f48a20" stroke-width="1.7"/><line x1="965.5" y1="526.0" x2="976.9" y2="526.0" stroke="#f48a20" stroke-width="1.7"/><line x1="974.0" y1="514.6" x2="974.0" y2="525.0" stroke="#f48a20" stroke-width="1.7"/><line x1="967.4" y1="514.6" x2="967.4" y2="525.0" stroke="#f48a20" stroke-width="1.7"/>
<line x1="980.2" y1="515.1" x2="985.9" y2="515.1" stroke="#f48a20" stroke-width="1.7"/><line x1="987.8" y1="517.0" x2="993.5" y2="517.0" stroke="#f48a20" stroke-width="1.7"/><line x1="981.1" y1="521.8" x2="992.5" y2="521.8" stroke="#f48a20" stroke-width="1.7"/><line x1="986.8" y1="518.0" x2="986.8" y2="527.5" stroke="#f48a20" stroke-width="1.7"/><line x1="982.1" y1="525.6" x2="991.6" y2="525.6" stroke="#f48a20" stroke-width="1.7"/>
<line x1="996.8" y1="515.6" x2="1002.4" y2="515.6" stroke="#f48a20" stroke-width="1.7"/><line x1="996.8" y1="520.4" x2="1002.4" y2="520.4" stroke="#f48a20" stroke-width="1.7"/><line x1="999.6" y1="513.8" x2="999.6" y2="527.0" stroke="#f48a20" stroke-width="1.7"/><line x1="1004.3" y1="518.5" x2="1010.0" y2="518.5" stroke="#f48a20" stroke-width="1.7"/><line x1="1007.2" y1="513.8" x2="1007.2" y2="527.0" stroke="#f48a20" stroke-width="1.7"/>
<line x1="1013.4" y1="513.4" x2="1026.7" y2="513.4" stroke="#f48a20" stroke-width="1.7"/><line x1="1013.4" y1="513.4" x2="1013.4" y2="526.6" stroke="#f48a20" stroke-width="1.7"/><line x1="1026.7" y1="513.4" x2="1026.7" y2="526.6" stroke="#f48a20" stroke-width="1.7"/><line x1="1016.2" y1="517.1" x2="1023.8" y2="523.8" stroke="#f48a20" stroke-width="1.7"/><line x1="1023.8" y1="517.1" x2="1016.2" y2="523.8" stroke="#f48a20" stroke-width="1.7"/>
<text x="947" y="538" font-family="Liberation Sans" font-size="5" fill="#f48a20" textLength="82">INTELLIGENT MANUFACTURING DATA</text>
</g>
</g></svg>
<!-- axis triad -->
<svg class="abs" style="left:55px;top:850px" width="80" height="110">
<text x="49" y="17" font-family="Liberation Sans" font-size="11" fill="#c8c8d0">Z</text>
<polygon points="36,71 59,67.5 61,90 39,95" fill="#6a7a9a" stroke="#c8c8c8" stroke-width="0.8"/>
<polygon points="37.5,86 60,81 61,90 39,95" fill="#a8a878" stroke="#e8e800" stroke-width="0.8"/>
<line x1="64" y1="88" x2="56" y2="29" stroke="#12d8d8" stroke-width="1.8"/>
<polygon points="55,21 52,33 59,32" fill="#12d8d8"/>
<line x1="64" y1="88" x2="22" y2="96" stroke="#12c812" stroke-width="1.8"/>
<polygon points="16,97 26,92 26,99" fill="#12c812"/>
<path d="M56,78 L62,86 M57,86 L61,79" stroke="#e02020" stroke-width="1.5"/><circle cx="61" cy="84" r="3" fill="#d02020" opacity="0.7"/>
<circle cx="64" cy="88" r="3.2" fill="#666"/>
<text x="4" y="103" font-family="Liberation Sans" font-size="11" fill="#c8c8d0">Y</text>
</svg>
<!-- small Y axis near machine -->
<svg class="abs" style="left:1060px;top:908px" width="70" height="25">
<text x="4" y="18" font-family="Liberation Sans" font-size="11" fill="#c8c8d0">Y</text>
<line x1="16" y1="14" x2="55" y2="8" stroke="#20c020" stroke-width="1.6"/>
<polygon points="13,15 21,10 21,16" fill="#20c020"/>
</svg>
<div id="status" class="abs"></div>
<!-- status row 1 -->
<div class="abs" style="left:1341px;top:1003px;width:131px;height:16px;background:#fff"></div>
<div class="grip" style="left:1336px;top:1003px;height:16px"></div>
<div class="grip" style="left:1476px;top:1003px;height:16px"></div>
<svg class="abs" style="left:1460px;top:1003px" width="14" height="16"><circle cx="7.5" cy="6.5" r="4" fill="none" stroke="#2a5ab8" stroke-width="1.4"/><line x1="5" y1="9" x2="1.5" y2="13" stroke="#2a5ab8" stroke-width="1.6"/></svg>
<span class="st" style="left:1486px;top:1004px"><span class="cj">绝对</span> XY <span class="cj">上视图</span></span>
<div class="sep" style="left:1592px;top:1003px;height:16px"></div>
<span class="st" style="left:1601px;top:1004px"><span class="cj">绝对视图</span></span>
<div class="grip" style="left:1659px;top:1003px;height:16px"></div>
<span class="st" style="left:1668px;top:1004px;font-weight:bold;font-size:11.5px">LAYER0</span>
<div class="sep" style="left:1726px;top:1003px;height:16px"></div>
<div class="sep" style="left:1757px;top:1003px;height:16px"></div>
<div class="abs" style="left:1762px;top:1004px;width:32px;height:13px;background:#4a6590"></div>
<div class="sep" style="left:1800px;top:1003px;height:16px"></div>
<div class="abs" style="left:1805px;top:1004px;width:32px;height:13px;background:#4a6590"></div>
<div class="sep" style="left:1843px;top:1003px;height:16px"></div>
<div class="abs" style="left:1848px;top:1004px;width:32px;height:13px;background:#4a6590"></div>
<div class="sep" style="left:1886px;top:1003px;height:16px"></div>
<svg class="abs" style="left:1893px;top:1002px" width="16" height="16"><circle cx="7.5" cy="7.5" r="6.5" fill="#1a3ac0"/><path d="M3,5 Q6,2 9,4 Q8,8 5,9 Z M9,9 Q12,8 13,11 Q10,13 8,12 Z" fill="#2ab02a"/></svg>
<div class="abs" style="left:0;top:1020px;width:1920px;height:1px;background:#a0a0a0"></div>
<!-- status row 2 -->
<div class="sep" style="left:1132px;top:1022px;height:16px"></div>
<span class="st" style="left:1141px;top:1024px"><span class="cj">拴牢</span></span>
<div class="sep" style="left:1176px;top:1022px;height:16px"></div>
<svg class="abs" style="left:1180px;top:1020px" width="220" height="20">
<rect x="2.5" y="2.5" width="15" height="15" fill="#e8e8f0" stroke="#888"/><path d="M6,8 A4,4 0 0 1 14,8 M14,12 A4,4 0 0 1 6,12" stroke="#e04060" stroke-width="1.5" fill="none"/>
<line x1="26.5" y1="2" x2="26.5" y2="18" stroke="#a0a0a0"/>
<rect x="34" y="1" width="17" height="17" fill="#f8d870"/><path d="M38,4 L44,8 L48,16" stroke="#b070e0" stroke-width="2" fill="none"/><path d="M42,8 L48,14 L44,14 Z" fill="#ccc" stroke="#666" stroke-width="0.6"/>
<line x1="57.5" y1="2" x2="57.5" y2="18" stroke="#a0a0a0"/>
<path d="M66,8 L72,4 L78,6 L74,10 Z" fill="#e8b070"/><rect x="66" y="9" width="8" height="8" fill="#dde6f8" stroke="#3a5ab0" stroke-width="0.7"/>
<line x1="88.5" y1="2" x2="88.5" y2="18" stroke="#a0a0a0"/>
<text x="97" y="16" font-family="Liberation Sans" font-size="16" font-weight="bold" fill="#4a7ac0">?</text>
<line x1="119.5" y1="2" x2="119.5" y2="18" stroke="#a0a0a0"/>
<rect x="128" y="4" width="8" height="8" fill="#3a7ae8"/><rect x="133" y="9" width="8" height="8" fill="#4a8aa0" stroke="#222" stroke-width="0.6"/><path d="M125,12 L132,12" stroke="#e02020" stroke-width="2"/>
<line x1="150.5" y1="2" x2="150.5" y2="18" stroke="#a0a0a0"/>
<rect x="156" y="1" width="18" height="18" fill="#f8d870"/><path d="M159,6 L165,3 L171,6 L165,9 Z" fill="#e040f0"/><path d="M159,6 L165,9 L165,17 L159,14 Z" fill="#5aa0b8"/><path d="M171,6 L165,9 L165,17 L171,14 Z" fill="#4a8ab0"/>
<line x1="182.5" y1="2" x2="182.5" y2="18" stroke="#a0a0a0"/>
</svg>
<span class="st" style="left:1463px;top:1024px;font-size:11.3px">LS: 1.00 PS: 1.00</span>
<div class="sep" style="left:1580px;top:1022px;height:16px"></div>
<span class="st" style="left:1589px;top:1024px"><span class="cj">单位</span>: <span class="cj">毫米</span></span>
<div class="sep" style="left:1654px;top:1022px;height:16px"></div>
<span class="st" style="left:1663px;top:1023px;font-size:12.8px">X = 3996.913 <span style="color:#e8102a">Y =-0714.369</span> Z = 0000.000</span>
<!-- sticker -->
<svg class="abs" style="left:1345px;top:960px" width="120" height="84"><g transform="translate(10,0)">
<circle cx="5" cy="45" r="8.5" fill="#8a5a48"/><text x="0.5" y="49.5" font-family="Liberation Sans" font-size="11" fill="#fff">A</text>
<circle cx="19.6" cy="64" r="8.5" fill="#8a5a48"/><path d="M15,61 L19.5,59 L24,61 L23,68 L16,68 Z" fill="#fff"/>
<path d="M44,12 Q46,2 52,4 M52,14 Q54,6 56,4" stroke="#a0602a" stroke-width="2" fill="none"/>
<circle cx="32" cy="16" r="6.5" fill="#c88a4a"/><circle cx="76" cy="16" r="6.5" fill="#c88a4a"/>
<path d="M36,60 Q52,74 72,58 L74,78 Q54,84 36,78 Z" fill="#f8e43a"/>
<ellipse cx="52" cy="38" rx="26" ry="25" fill="#c88a4a"/>
<ellipse cx="54" cy="41" rx="21" ry="18" fill="#f8e43a"/>
<circle cx="47" cy="37" r="1.5" fill="#333"/><circle cx="61" cy="37" r="1.5" fill="#333"/>
<ellipse cx="41" cy="45" rx="3.5" ry="2.5" fill="#f8a070"/><ellipse cx="67" cy="45" rx="3.5" ry="2.5" fill="#f8a070"/>
<circle cx="40" cy="69" r="7" fill="#c88a4a"/><circle cx="40" cy="71" r="5" fill="#d8a070"/>
<text x="79" y="28" font-family="Liberation Sans" font-size="19" font-weight="bold" fill="#f4e0c8" stroke="#b07a4a" stroke-width="1.2">W</text>
<circle cx="91" cy="37" r="9" fill="#d0a070"/><circle cx="91" cy="37" r="3.5" fill="#f4e8d8"/>
<text x="80" y="73" font-family="Liberation Sans" font-size="22" font-weight="bold" fill="#f8e43a" stroke="#c09a40" stroke-width="1">W</text>
</g></svg>
<!-- taskbar -->
<div id="taskbar" class="abs"></div>
<div class="abs" style="left:48px;top:1040px;width:344px;height:8px;background:#f0f0f0;border-top:1px solid #b8b8c8"></div>
<div class="abs" style="left:687px;top:1040px;width:45px;height:8px;background:#3a3a3a"></div>
<div class="abs" style="left:732px;top:1040px;width:2px;height:8px;background:#5a5a5a"></div>
<div class="abs" style="left:1908px;top:1040px;width:1px;height:8px;background:#5a5a5a"></div>
<svg class="abs" style="left:1805px;top:1040px" width="60" height="8"><text x="5" y="12" font-family="Liberation Sans" font-size="12" fill="#fff">10:06</text></svg>
</body></html>
